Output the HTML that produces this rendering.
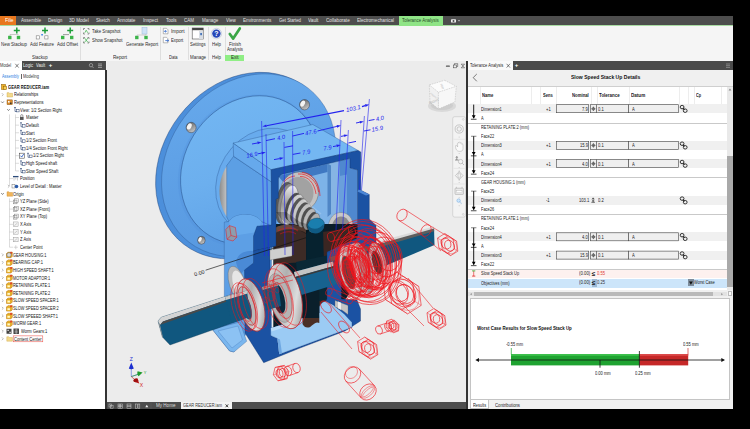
<!DOCTYPE html>
<html><head><meta charset="utf-8">
<style>
*{box-sizing:border-box;margin:0;padding:0}
html,body{width:750px;height:429px;overflow:hidden;background:#000;font-family:"Liberation Sans",sans-serif;}
.a{position:absolute}
.t{position:absolute;white-space:nowrap;line-height:1.16;font-size:4.6px;color:#222;transform-origin:0 50%}
#app{position:absolute;left:0;top:16px;width:733px;height:393px;background:#f0f0f0;overflow:hidden}
#w{position:absolute;left:0;top:-16px;width:750px;height:429px}
svg{position:absolute;overflow:visible}
</style></head><body>
<div id="app"><div id="w">
<div class="a" style="left:0px;top:16px;width:733px;height:9.5px;background:#4d4d4d;"></div>
<div class="a" style="left:0px;top:16px;width:16px;height:9.5px;background:#e8771f;"></div>
<div class="a" style="left:0px;top:25px;width:733px;height:1px;background:#a9dca3;"></div>
<div class="a" style="left:399px;top:16px;width:43.5px;height:10px;background:#8fe486;"></div>
<div class="t" style="left:4.50px;top:18.30px;font-size:5.0px;color:#fff;transform:scaleX(1.055);">File</div>
<div class="t" style="left:20.70px;top:18.30px;font-size:5.0px;color:#e2e2e2;transform:scaleX(0.911);">Assemble</div>
<div class="t" style="left:47.70px;top:18.30px;font-size:5.0px;color:#e2e2e2;transform:scaleX(0.919);">Design</div>
<div class="t" style="left:69.00px;top:18.30px;font-size:5.0px;color:#e2e2e2;transform:scaleX(0.921);">3D Model</div>
<div class="t" style="left:96.00px;top:18.30px;font-size:5.0px;color:#e2e2e2;transform:scaleX(0.896);">Sketch</div>
<div class="t" style="left:117.30px;top:18.30px;font-size:5.0px;color:#e2e2e2;transform:scaleX(0.919);">Annotate</div>
<div class="t" style="left:143.30px;top:18.30px;font-size:5.0px;color:#e2e2e2;transform:scaleX(0.930);">Inspect</div>
<div class="t" style="left:165.70px;top:18.30px;font-size:5.0px;color:#e2e2e2;transform:scaleX(0.908);">Tools</div>
<div class="t" style="left:184.30px;top:18.30px;font-size:5.0px;color:#e2e2e2;transform:scaleX(0.900);">CAM</div>
<div class="t" style="left:202.00px;top:18.30px;font-size:5.0px;color:#e2e2e2;transform:scaleX(0.902);">Manage</div>
<div class="t" style="left:226.00px;top:18.30px;font-size:5.0px;color:#e2e2e2;transform:scaleX(0.903);">View</div>
<div class="t" style="left:242.70px;top:18.30px;font-size:5.0px;color:#e2e2e2;transform:scaleX(0.926);">Environments</div>
<div class="t" style="left:279.00px;top:18.30px;font-size:5.0px;color:#e2e2e2;transform:scaleX(0.860);">Get Started</div>
<div class="t" style="left:308.30px;top:18.30px;font-size:5.0px;color:#e2e2e2;transform:scaleX(0.943);">Vault</div>
<div class="t" style="left:326.00px;top:18.30px;font-size:5.0px;color:#e2e2e2;transform:scaleX(0.927);">Collaborate</div>
<div class="t" style="left:357.00px;top:18.30px;font-size:5.0px;color:#e2e2e2;transform:scaleX(0.906);">Electromechanical</div>
<div class="t" style="left:402.30px;top:18.30px;font-size:5.0px;color:#2a4a28;transform:scaleX(0.886);">Tolerance Analysis</div>
<svg style="left:450px;top:18px" width="14" height="6" viewBox="0 0 14 6"><rect x="1" y="1.2" width="5" height="3.4" rx="0.7" fill="#eee"/><circle cx="3.5" cy="2.9" r="1" fill="#4d4d4d"/><path d="M8 2.3 L10 2.3 L9 3.6 Z" fill="#eee"/></svg>
<div class="a" style="left:0px;top:26px;width:733px;height:35px;background:#f5f5f5;"></div>
<div class="a" style="left:80.2px;top:27px;width:0.6px;height:33px;background:#dedede;"></div>
<div class="a" style="left:160.2px;top:27px;width:0.6px;height:33px;background:#dedede;"></div>
<div class="a" style="left:187.6px;top:27px;width:0.6px;height:33px;background:#dedede;"></div>
<div class="a" style="left:207.9px;top:27px;width:0.6px;height:33px;background:#dedede;"></div>
<div class="a" style="left:224.5px;top:27px;width:0.6px;height:33px;background:#dedede;"></div>
<div class="a" style="left:225px;top:54.7px;width:19.4px;height:6px;background:#90ee86;"></div>
<div class="t" style="left:1.40px;top:41.50px;font-size:5.0px;color:#2a2a2a;transform:scaleX(0.883);">New Stackup</div>
<div class="t" style="left:30.20px;top:41.50px;font-size:5.0px;color:#2a2a2a;transform:scaleX(0.865);">Add Feature</div>
<div class="t" style="left:57.20px;top:41.50px;font-size:5.0px;color:#2a2a2a;transform:scaleX(0.897);">Add Offset</div>
<div class="t" style="left:32.00px;top:55.00px;font-size:5.0px;color:#2a2a2a;transform:scaleX(0.869);">Stackup</div>
<div class="t" style="left:91.50px;top:28.70px;font-size:5.0px;color:#2a2a2a;transform:scaleX(0.862);">Take Snapshot</div>
<div class="t" style="left:91.50px;top:37.70px;font-size:5.0px;color:#2a2a2a;transform:scaleX(0.871);">Show Snapshot</div>
<div class="t" style="left:125.50px;top:41.50px;font-size:5.0px;color:#2a2a2a;transform:scaleX(0.862);">Generate Report</div>
<div class="t" style="left:113.00px;top:55.00px;font-size:5.0px;color:#2a2a2a;transform:scaleX(0.933);">Report</div>
<div class="t" style="left:171.00px;top:28.70px;font-size:5.0px;color:#2a2a2a;transform:scaleX(0.953);">Import</div>
<div class="t" style="left:171.00px;top:37.70px;font-size:5.0px;color:#2a2a2a;transform:scaleX(0.851);">Export</div>
<div class="t" style="left:169.40px;top:55.00px;font-size:5.0px;color:#2a2a2a;transform:scaleX(0.814);">Data</div>
<div class="t" style="left:189.70px;top:41.50px;font-size:5.0px;color:#2a2a2a;transform:scaleX(0.863);">Settings</div>
<div class="t" style="left:189.70px;top:55.00px;font-size:5.0px;color:#2a2a2a;transform:scaleX(0.891);">Manage</div>
<div class="t" style="left:211.90px;top:41.50px;font-size:5.0px;color:#2a2a2a;transform:scaleX(0.875);">Help</div>
<div class="t" style="left:211.90px;top:55.00px;font-size:5.0px;color:#2a2a2a;transform:scaleX(0.875);">Help</div>
<div class="t" style="left:228.50px;top:41.50px;font-size:5.0px;color:#2a2a2a;transform:scaleX(0.900);">Finish</div>
<div class="t" style="left:226.50px;top:47.20px;font-size:5.0px;color:#2a2a2a;transform:scaleX(0.859);">Analysis</div>
<div class="t" style="left:231.00px;top:55.30px;font-size:5.0px;color:#2a2a2a;transform:scaleX(0.900);">Exit</div>
<svg style="left:0;top:0" width="260" height="62" viewBox="0 0 260 62"><path d="M13.8 30.6 H19.8 M16.8 27.6 V33.6" stroke="#1e9e3a" stroke-width="1.5" fill="none"/><rect x="8.1" y="35.8" width="3.4" height="3.4" fill="#3cb54a"/><rect x="16.8" y="35.8" width="3.4" height="3.4" fill="#3cb54a"/><path d="M10 36 V34.5 H18.5" stroke="#999" stroke-width="0.5" fill="none"/><path d="M42 30.6 H48 M45 27.6 V33.6" stroke="#1e9e3a" stroke-width="1.5" fill="none"/><rect x="36.2" y="35.8" width="3.2" height="3.2" fill="#fff" stroke="#777" stroke-width="0.55"/><rect x="44.8" y="35.8" width="3.2" height="3.2" fill="#fff" stroke="#777" stroke-width="0.55"/><rect x="41.2" y="34" width="1.8" height="1.5" fill="#4a8ee8"/><path d="M67.2 30.6 H73.2 M70.2 27.6 V33.6" stroke="#1e9e3a" stroke-width="1.5" fill="none"/><rect x="61" y="35.8" width="3.4" height="3.4" fill="#3cb54a"/><rect x="70" y="35.8" width="3.4" height="3.4" fill="#3cb54a"/><path d="M63 34.6 H69" stroke="#777" stroke-width="0.7"/><path d="M83.5 30 V28.5 H85 M87.5 28.5 H89 V30 M89 32.5 V34 H87.5 M85 34 H83.5 V32.5" stroke="#555" stroke-width="0.6" fill="none"/><path d="M84.8 32.8 L86.2 30.2 L87.8 32.8" stroke="#3cb54a" stroke-width="0.7" fill="none"/><path d="M83.5 39 V37.5 H85 M87.5 37.5 H89 V39 M89 41.5 V43 H87.5 M85 43 H83.5 V41.5" stroke="#555" stroke-width="0.6" fill="none"/><path d="M84.5 38 L88 42.4 M88 38 L84.5 42.4" stroke="#3cb54a" stroke-width="0.7" fill="none"/><rect x="142" y="27.5" width="5" height="6.5" fill="#cfe3f7" stroke="#9bbbd8" stroke-width="0.5"/><rect x="135.1" y="35.8" width="3.4" height="3.4" fill="#3cb54a"/><rect x="144.3" y="35.8" width="3.4" height="3.4" fill="#3cb54a"/><path d="M137 36 V35 H146 V34" stroke="#aaa" stroke-width="0.5" fill="none"/><path d="M163.3 28.3 H166.5 L168 29.8 V33.8 H163.3 Z" fill="#fff" stroke="#777" stroke-width="0.5"/><path d="M163.8 31.3 H166.2 M165.2 30.3 L166.4 31.3 L165.2 32.3" stroke="#2a62c9" stroke-width="0.8" fill="none"/><path d="M163.3 37.3 H166.5 L168 38.8 V42.8 H163.3 Z" fill="#fff" stroke="#777" stroke-width="0.5"/><path d="M165.3 40.6 H168.4 M167.4 39.6 L168.6 40.6 L167.4 41.6" stroke="#2a62c9" stroke-width="0.8" fill="none"/><rect x="192.2" y="28" width="11" height="11" fill="#fff" stroke="#555" stroke-width="0.6"/><rect x="192.2" y="28" width="11" height="2.2" fill="#444"/><rect x="199" y="31" width="4" height="8" fill="#d8dde4"/><rect x="200.3" y="33" width="1.6" height="2.2" fill="#3a6bb5"/><circle cx="216.4" cy="33.6" r="5.3" fill="#e9edf5" stroke="#b5bccb" stroke-width="0.5"/><circle cx="216.4" cy="33.6" r="4.2" fill="#2747b8"/><text x="216.4" y="36.1" font-size="7" font-weight="bold" fill="#fff" text-anchor="middle" font-family="Liberation Sans">?</text><path d="M229.8 34 L233.2 38.6 L239.8 28.4" stroke="#3aa646" stroke-width="2.7" fill="none" stroke-linecap="round" stroke-linejoin="round"/></svg>
<div class="a" style="left:0px;top:61px;width:104.5px;height:348px;background:#fff;"></div>
<div class="a" style="left:21.8px;top:61px;width:84.7px;height:9px;background:#4a4a4a;"></div>
<div class="a" style="left:104.5px;top:70px;width:2px;height:339px;background:#333;"></div>
<div class="t" style="left:0.30px;top:63.12px;font-size:4.8px;color:#333;transform:scaleX(0.857);">Model</div>
<svg style="left:14px;top:62px" width="7" height="8" viewBox="14 62 7 8"><path d="M15.3 63.8 L18.7 67.6 M18.7 63.8 L15.3 67.6" stroke="#333" stroke-width="0.6"/></svg>
<div class="t" style="left:23.00px;top:63.12px;font-size:4.8px;color:#f2f2f2;transform:scaleX(0.871);">Logic</div>
<div class="t" style="left:35.90px;top:63.12px;font-size:4.8px;color:#f2f2f2;transform:scaleX(0.860);">Vault</div>
<div class="t" style="left:48.80px;top:62.12px;font-size:6px;color:#fff;transform:scaleX(1.000);font-weight:bold;">+</div>
<svg style="left:88px;top:62px" width="16" height="8" viewBox="0 0 16 8"><circle cx="3" cy="3.2" r="1.7" fill="none" stroke="#bbb" stroke-width="0.6"/><path d="M4.2 4.5 L5.6 6" stroke="#bbb" stroke-width="0.6"/><path d="M10 2 H14 M10 3.7 H14 M10 5.4 H14" stroke="#bbb" stroke-width="0.7"/></svg>
<div class="t" style="left:1.50px;top:73.92px;font-size:4.8px;color:#2a7de1;transform:scaleX(0.817);">Assembly</div>
<div class="a" style="left:20.6px;top:73.6px;width:0.5px;height:5.2px;background:#666;"></div>
<div class="t" style="left:23.00px;top:73.92px;font-size:4.8px;color:#333;transform:scaleX(0.821);">Modeling</div>
<div class="t" style="left:7.70px;top:84.76px;font-size:4.9px;color:#111;transform:scaleX(0.830);font-weight:bold;">GEAR REDUCER.iam</div>
<div class="t" style="left:13.60px;top:92.39px;font-size:4.9px;color:#111;transform:scaleX(0.830);">Relationships</div>
<div class="t" style="left:13.60px;top:100.02px;font-size:4.9px;color:#111;transform:scaleX(0.830);">Representations</div>
<div class="t" style="left:19.70px;top:107.65px;font-size:4.9px;color:#111;transform:scaleX(0.830);">View: 1/2 Section Right</div>
<div class="t" style="left:25.60px;top:115.28px;font-size:4.9px;color:#111;transform:scaleX(0.830);">Master</div>
<div class="t" style="left:25.60px;top:122.91px;font-size:4.9px;color:#111;transform:scaleX(0.830);">Default</div>
<div class="t" style="left:25.60px;top:130.54px;font-size:4.9px;color:#111;transform:scaleX(0.830);">Start</div>
<div class="t" style="left:25.60px;top:138.17px;font-size:4.9px;color:#111;transform:scaleX(0.830);">1/2 Section Front</div>
<div class="t" style="left:25.60px;top:145.80px;font-size:4.9px;color:#111;transform:scaleX(0.830);">1/4 Section Front Right</div>
<div class="t" style="left:33.30px;top:153.43px;font-size:4.9px;color:#111;transform:scaleX(0.830);">1/2 Section Right</div>
<div class="t" style="left:25.60px;top:161.06px;font-size:4.9px;color:#111;transform:scaleX(0.830);">High Speed shaft</div>
<div class="t" style="left:25.60px;top:168.69px;font-size:4.9px;color:#111;transform:scaleX(0.830);">Slow Speed Shaft</div>
<div class="t" style="left:19.70px;top:176.32px;font-size:4.9px;color:#111;transform:scaleX(0.830);">Position</div>
<div class="t" style="left:19.70px;top:183.95px;font-size:4.9px;color:#111;transform:scaleX(0.830);">Level of Detail : Master</div>
<div class="t" style="left:13.30px;top:191.58px;font-size:4.9px;color:#111;transform:scaleX(0.830);">Origin</div>
<div class="t" style="left:19.70px;top:199.21px;font-size:4.9px;color:#111;transform:scaleX(0.830);">YZ Plane (Side)</div>
<div class="t" style="left:19.70px;top:206.84px;font-size:4.9px;color:#111;transform:scaleX(0.830);">XZ Plane (Front)</div>
<div class="t" style="left:19.70px;top:214.47px;font-size:4.9px;color:#111;transform:scaleX(0.830);">XY Plane (Top)</div>
<div class="t" style="left:19.70px;top:222.10px;font-size:4.9px;color:#111;transform:scaleX(0.830);">X Axis</div>
<div class="t" style="left:19.70px;top:229.73px;font-size:4.9px;color:#111;transform:scaleX(0.830);">Y Axis</div>
<div class="t" style="left:19.70px;top:237.36px;font-size:4.9px;color:#111;transform:scaleX(0.830);">Z Axis</div>
<div class="t" style="left:19.70px;top:244.99px;font-size:4.9px;color:#111;transform:scaleX(0.830);">Center Point</div>
<div class="t" style="left:13.30px;top:252.62px;font-size:4.9px;color:#111;transform:scaleX(0.795);">GEAR HOUSING:1</div>
<div class="t" style="left:13.30px;top:260.25px;font-size:4.9px;color:#111;transform:scaleX(0.795);">BEARING CAP:1</div>
<div class="t" style="left:13.30px;top:267.88px;font-size:4.9px;color:#111;transform:scaleX(0.795);">HIGH SPEED SHAFT:1</div>
<div class="t" style="left:13.30px;top:275.51px;font-size:4.9px;color:#111;transform:scaleX(0.795);">MOTOR ADAPTOR:1</div>
<div class="t" style="left:13.30px;top:283.14px;font-size:4.9px;color:#111;transform:scaleX(0.795);">RETAINING PLATE:1</div>
<div class="t" style="left:13.30px;top:290.77px;font-size:4.9px;color:#111;transform:scaleX(0.795);">RETAINING PLATE:2</div>
<div class="t" style="left:13.30px;top:298.40px;font-size:4.9px;color:#111;transform:scaleX(0.795);">SLOW SPEED SPACER:1</div>
<div class="t" style="left:13.30px;top:306.03px;font-size:4.9px;color:#111;transform:scaleX(0.795);">SLOW SPEED SPACER:2</div>
<div class="t" style="left:13.30px;top:313.66px;font-size:4.9px;color:#111;transform:scaleX(0.795);">SLOW SPEEED SHAFT:1</div>
<div class="t" style="left:13.30px;top:321.29px;font-size:4.9px;color:#111;transform:scaleX(0.795);">WORM GEAR:1</div>
<div class="t" style="left:20.50px;top:328.92px;font-size:4.9px;color:#111;transform:scaleX(0.830);">Worm Gears:1</div>
<div class="t" style="left:13.80px;top:336.55px;font-size:4.9px;color:#111;transform:scaleX(0.830);">Content Center</div>
<svg style="left:0;top:0" width="106" height="410" viewBox="0 0 106 410"><path d="M15.5 114.468 V170.93 M9.5 114.468 V186.19 M9.5 198.398 V247.23" stroke="#aaa" stroke-width="0.4" fill="none"/><path d="M15.5 117.52 H19" stroke="#aaa" stroke-width="0.4"/><path d="M15.5 125.15 H19" stroke="#aaa" stroke-width="0.4"/><path d="M15.5 132.78 H19" stroke="#aaa" stroke-width="0.4"/><path d="M15.5 140.41 H19" stroke="#aaa" stroke-width="0.4"/><path d="M15.5 148.04 H19" stroke="#aaa" stroke-width="0.4"/><path d="M15.5 155.67000000000002 H19" stroke="#aaa" stroke-width="0.4"/><path d="M15.5 163.3 H19" stroke="#aaa" stroke-width="0.4"/><path d="M15.5 170.93 H19" stroke="#aaa" stroke-width="0.4"/><path d="M9.5 201.45 H13" stroke="#aaa" stroke-width="0.4"/><path d="M9.5 209.07999999999998 H13" stroke="#aaa" stroke-width="0.4"/><path d="M9.5 216.71 H13" stroke="#aaa" stroke-width="0.4"/><path d="M9.5 224.34 H13" stroke="#aaa" stroke-width="0.4"/><path d="M9.5 231.97 H13" stroke="#aaa" stroke-width="0.4"/><path d="M9.5 239.6 H13" stroke="#aaa" stroke-width="0.4"/><path d="M9.5 247.23 H13" stroke="#aaa" stroke-width="0.4"/><path d="M9.5 178.56 H13" stroke="#aaa" stroke-width="0.4"/><rect x="1.5" y="84.4" width="4" height="5" fill="#f0b429" stroke="#8a5a00" stroke-width="0.5"/><rect x="3.7" y="86.2" width="3" height="3.4" fill="#f6d05a" stroke="#8a5a00" stroke-width="0.5"/><path d="M1.9 93.22999999999999 L3.3 94.63 L1.9 96.03" stroke="#777" stroke-width="0.5" fill="none"/><path d="M7 92.63 H9 L9.6 93.33 H12.6 V97.03 H7 Z" fill="#f3d98b" stroke="#c9a545" stroke-width="0.4"/><path d="M1.2 101.46000000000001 L2.5 102.96000000000001 L3.8 101.46000000000001" stroke="#444" stroke-width="0.6" fill="none"/><rect x="7" y="99.86" width="5.4" height="4.8" fill="#d98b2b" stroke="#7a4a10" stroke-width="0.4"/><rect x="8" y="100.96000000000001" width="1.6" height="1.6" fill="#fff"/><rect x="10" y="102.56" width="1.6" height="1.4" fill="#333"/><path d="M7.2 109.09 L8.5 110.59 L9.8 109.09" stroke="#444" stroke-width="0.6" fill="none"/><path d="M14.0 107.49 H16.0 M15.0 107.49 V111.49 H16.5" stroke="#223b6b" stroke-width="0.6" fill="none"/><rect x="16.5" y="109.29" width="2.6" height="2.6" fill="#fff" stroke="#223b6b" stroke-width="0.5"/><rect x="20" y="116.92" width="3.6" height="3" fill="#555"/><path d="M20.7 116.92 V115.72 A1.1 1.1 0 0 1 22.9 115.72 V116.92" stroke="#555" stroke-width="0.6" fill="none"/><path d="M20.0 122.75 H22.0 M21.0 122.75 V126.75 H22.5" stroke="#223b6b" stroke-width="0.6" fill="none"/><rect x="22.5" y="124.55000000000001" width="2.6" height="2.6" fill="#fff" stroke="#223b6b" stroke-width="0.5"/><path d="M20.0 130.38 H22.0 M21.0 130.38 V134.38 H22.5" stroke="#223b6b" stroke-width="0.6" fill="none"/><rect x="22.5" y="132.18" width="2.6" height="2.6" fill="#fff" stroke="#223b6b" stroke-width="0.5"/><path d="M20.0 138.01 H22.0 M21.0 138.01 V142.01 H22.5" stroke="#223b6b" stroke-width="0.6" fill="none"/><rect x="22.5" y="139.81" width="2.6" height="2.6" fill="#fff" stroke="#223b6b" stroke-width="0.5"/><path d="M20.0 145.64 H22.0 M21.0 145.64 V149.64 H22.5" stroke="#223b6b" stroke-width="0.6" fill="none"/><rect x="22.5" y="147.44" width="2.6" height="2.6" fill="#fff" stroke="#223b6b" stroke-width="0.5"/><path d="M27.0 153.27 H29.0 M28.0 153.27 V157.27 H29.5" stroke="#223b6b" stroke-width="0.6" fill="none"/><rect x="29.5" y="155.07000000000002" width="2.6" height="2.6" fill="#fff" stroke="#223b6b" stroke-width="0.5"/><rect x="19.5" y="153.17000000000002" width="5" height="5" fill="#fff" stroke="#333" stroke-width="0.5"/><path d="M20.5 155.67000000000002 L21.7 157.07000000000002 L23.7 154.07000000000002" stroke="#1b4fbf" stroke-width="0.8" fill="none"/><path d="M20.0 160.9 H22.0 M21.0 160.9 V164.9 H22.5" stroke="#223b6b" stroke-width="0.6" fill="none"/><rect x="22.5" y="162.70000000000002" width="2.6" height="2.6" fill="#fff" stroke="#223b6b" stroke-width="0.5"/><path d="M20.0 168.53 H22.0 M21.0 168.53 V172.53 H22.5" stroke="#223b6b" stroke-width="0.6" fill="none"/><rect x="22.5" y="170.33" width="2.6" height="2.6" fill="#fff" stroke="#223b6b" stroke-width="0.5"/><rect x="13" y="175.96" width="5.5" height="1.3" fill="#2b4a7a"/><path d="M14 177.56 V180.56 M15.8 177.56 V179.56 M17.5 177.56 V180.56" stroke="#888" stroke-width="0.4"/><path d="M7.9 184.79 L9.3 186.19 L7.9 187.59" stroke="#777" stroke-width="0.5" fill="none"/><rect x="12" y="184.59" width="3" height="3.4" fill="#fff" stroke="#555" stroke-width="0.4"/><circle cx="16.5" cy="186.49" r="1.8" fill="#2a5aa8"/><path d="M1.2 193.01999999999998 L2.5 194.51999999999998 L3.8 193.01999999999998" stroke="#444" stroke-width="0.6" fill="none"/><path d="M7 191.82 H9 L9.6 192.51999999999998 H12.6 V196.22 H7 Z" fill="#f1b55a" stroke="#c98a2a" stroke-width="0.4"/><rect x="13.2" y="200.04999999999998" width="3.8" height="3.8" fill="#eee" stroke="#666" stroke-width="0.4"/><rect x="14.5" y="198.85" width="3.8" height="3.8" fill="none" stroke="#666" stroke-width="0.4"/><rect x="13.2" y="207.67999999999998" width="3.8" height="3.8" fill="#eee" stroke="#666" stroke-width="0.4"/><rect x="14.5" y="206.48" width="3.8" height="3.8" fill="none" stroke="#666" stroke-width="0.4"/><rect x="13.2" y="215.31" width="3.8" height="3.8" fill="#eee" stroke="#666" stroke-width="0.4"/><rect x="14.5" y="214.11" width="3.8" height="3.8" fill="none" stroke="#666" stroke-width="0.4"/><rect x="13.5" y="221.94" width="4.6" height="4.6" fill="#f4f4f4" stroke="#888" stroke-width="0.4"/><path d="M14.3 225.74 L17.1 223.34" stroke="#888" stroke-width="0.4"/><rect x="13.5" y="229.57" width="4.6" height="4.6" fill="#f4f4f4" stroke="#888" stroke-width="0.4"/><path d="M14.3 233.37 L17.1 230.97" stroke="#888" stroke-width="0.4"/><rect x="13.5" y="237.2" width="4.6" height="4.6" fill="#f4f4f4" stroke="#888" stroke-width="0.4"/><path d="M14.3 241.0 L17.1 238.6" stroke="#888" stroke-width="0.4"/><path d="M13.8 247.23 H17.8 M15.8 245.23 V249.23" stroke="#bbb" stroke-width="0.6"/><path d="M1.9 253.45999999999998 L3.3 254.85999999999999 L1.9 256.26" stroke="#777" stroke-width="0.5" fill="none"/><path d="M6.5 253.66 L7.9 252.26 H12.3 V256.26 L10.9 257.65999999999997 H6.5 Z" fill="#f5c63a" stroke="#b46a00" stroke-width="0.5"/><path d="M6.5 253.66 H10.9 V257.65999999999997 M10.9 253.66 L12.3 252.26" stroke="#b46a00" stroke-width="0.4" fill="none"/><rect x="7.5" y="254.85999999999999" width="2.4" height="1.8" fill="#fff8d0"/><circle cx="11.1" cy="252.85999999999999" r="1.1" fill="#e0452a"/><circle cx="9.0" cy="254.85999999999999" r="2.2" fill="#ddd" stroke="#555" stroke-width="0.5"/><path d="M1.9 261.09000000000003 L3.3 262.49 L1.9 263.89" stroke="#777" stroke-width="0.5" fill="none"/><path d="M6.5 261.29 L7.9 259.89 H12.3 V263.89 L10.9 265.29 H6.5 Z" fill="#f5c63a" stroke="#b46a00" stroke-width="0.5"/><path d="M6.5 261.29 H10.9 V265.29 M10.9 261.29 L12.3 259.89" stroke="#b46a00" stroke-width="0.4" fill="none"/><rect x="7.5" y="262.49" width="2.4" height="1.8" fill="#fff8d0"/><circle cx="11.1" cy="260.49" r="1.1" fill="#e0452a"/><path d="M1.9 268.72 L3.3 270.12 L1.9 271.52" stroke="#777" stroke-width="0.5" fill="none"/><path d="M6.5 268.92 L7.9 267.52 H12.3 V271.52 L10.9 272.92 H6.5 Z" fill="#f5c63a" stroke="#b46a00" stroke-width="0.5"/><path d="M6.5 268.92 H10.9 V272.92 M10.9 268.92 L12.3 267.52" stroke="#b46a00" stroke-width="0.4" fill="none"/><rect x="7.5" y="270.12" width="2.4" height="1.8" fill="#fff8d0"/><circle cx="11.1" cy="268.12" r="1.1" fill="#e0452a"/><path d="M1.9 276.35 L3.3 277.75 L1.9 279.15" stroke="#777" stroke-width="0.5" fill="none"/><path d="M6.5 276.55 L7.9 275.15 H12.3 V279.15 L10.9 280.55 H6.5 Z" fill="#f5c63a" stroke="#b46a00" stroke-width="0.5"/><path d="M6.5 276.55 H10.9 V280.55 M10.9 276.55 L12.3 275.15" stroke="#b46a00" stroke-width="0.4" fill="none"/><rect x="7.5" y="277.75" width="2.4" height="1.8" fill="#fff8d0"/><circle cx="11.1" cy="275.75" r="1.1" fill="#e0452a"/><path d="M1.9 283.98 L3.3 285.38 L1.9 286.78" stroke="#777" stroke-width="0.5" fill="none"/><path d="M6.5 284.18 L7.9 282.78 H12.3 V286.78 L10.9 288.18 H6.5 Z" fill="#f5c63a" stroke="#b46a00" stroke-width="0.5"/><path d="M6.5 284.18 H10.9 V288.18 M10.9 284.18 L12.3 282.78" stroke="#b46a00" stroke-width="0.4" fill="none"/><rect x="7.5" y="285.38" width="2.4" height="1.8" fill="#fff8d0"/><circle cx="11.1" cy="283.38" r="1.1" fill="#e0452a"/><path d="M1.9 291.61 L3.3 293.01 L1.9 294.40999999999997" stroke="#777" stroke-width="0.5" fill="none"/><path d="M6.5 291.81 L7.9 290.40999999999997 H12.3 V294.40999999999997 L10.9 295.81 H6.5 Z" fill="#f5c63a" stroke="#b46a00" stroke-width="0.5"/><path d="M6.5 291.81 H10.9 V295.81 M10.9 291.81 L12.3 290.40999999999997" stroke="#b46a00" stroke-width="0.4" fill="none"/><rect x="7.5" y="293.01" width="2.4" height="1.8" fill="#fff8d0"/><circle cx="11.1" cy="291.01" r="1.1" fill="#e0452a"/><path d="M1.9 299.24 L3.3 300.64 L1.9 302.03999999999996" stroke="#777" stroke-width="0.5" fill="none"/><path d="M6.5 299.44 L7.9 298.03999999999996 H12.3 V302.03999999999996 L10.9 303.44 H6.5 Z" fill="#f5c63a" stroke="#b46a00" stroke-width="0.5"/><path d="M6.5 299.44 H10.9 V303.44 M10.9 299.44 L12.3 298.03999999999996" stroke="#b46a00" stroke-width="0.4" fill="none"/><rect x="7.5" y="300.64" width="2.4" height="1.8" fill="#fff8d0"/><circle cx="11.1" cy="298.64" r="1.1" fill="#e0452a"/><path d="M1.9 306.87 L3.3 308.27 L1.9 309.66999999999996" stroke="#777" stroke-width="0.5" fill="none"/><path d="M6.5 307.07 L7.9 305.66999999999996 H12.3 V309.66999999999996 L10.9 311.07 H6.5 Z" fill="#f5c63a" stroke="#b46a00" stroke-width="0.5"/><path d="M6.5 307.07 H10.9 V311.07 M10.9 307.07 L12.3 305.66999999999996" stroke="#b46a00" stroke-width="0.4" fill="none"/><rect x="7.5" y="308.27" width="2.4" height="1.8" fill="#fff8d0"/><circle cx="11.1" cy="306.27" r="1.1" fill="#e0452a"/><path d="M1.9 314.5 L3.3 315.9 L1.9 317.29999999999995" stroke="#777" stroke-width="0.5" fill="none"/><path d="M6.5 314.7 L7.9 313.29999999999995 H12.3 V317.29999999999995 L10.9 318.7 H6.5 Z" fill="#f5c63a" stroke="#b46a00" stroke-width="0.5"/><path d="M6.5 314.7 H10.9 V318.7 M10.9 314.7 L12.3 313.29999999999995" stroke="#b46a00" stroke-width="0.4" fill="none"/><rect x="7.5" y="315.9" width="2.4" height="1.8" fill="#fff8d0"/><circle cx="11.1" cy="313.9" r="1.1" fill="#e0452a"/><path d="M1.9 322.13 L3.3 323.53 L1.9 324.92999999999995" stroke="#777" stroke-width="0.5" fill="none"/><path d="M6.5 322.33 L7.9 320.92999999999995 H12.3 V324.92999999999995 L10.9 326.33 H6.5 Z" fill="#f5c63a" stroke="#b46a00" stroke-width="0.5"/><path d="M6.5 322.33 H10.9 V326.33 M10.9 322.33 L12.3 320.92999999999995" stroke="#b46a00" stroke-width="0.4" fill="none"/><rect x="7.5" y="323.53" width="2.4" height="1.8" fill="#fff8d0"/><circle cx="11.1" cy="321.53" r="1.1" fill="#e0452a"/><path d="M1.9 329.76 L3.3 331.15999999999997 L1.9 332.55999999999995" stroke="#777" stroke-width="0.5" fill="none"/><rect x="6.5" y="328.76" width="5" height="5" fill="#444"/><rect x="7.5" y="329.76" width="1.2" height="1.2" fill="#fff"/><rect x="9.5" y="331.76" width="1.2" height="1.2" fill="#fff"/><rect x="13.5" y="328.55999999999995" width="5.4" height="5.4" fill="#333"/><path d="M14.5 329.96 H17.9 M14.5 331.35999999999996 H17.9 M14.5 332.76 H17.9 M16.2 328.55999999999995 V333.96" stroke="#ddd" stroke-width="0.5"/><path d="M1.9 337.39 L3.3 338.78999999999996 L1.9 340.18999999999994" stroke="#777" stroke-width="0.5" fill="none"/><path d="M6.8 336.78999999999996 H8.8 L9.4 337.48999999999995 H12.399999999999999 V341.18999999999994 H6.8 Z" fill="#f3d98b" stroke="#c9a545" stroke-width="0.4"/><rect x="13.2" y="335.89" width="29.6" height="5.9" fill="none" stroke="#e8433a" stroke-width="0.5"/></svg>
<div class="a" style="left:106.5px;top:61px;width:359.5px;height:342.5px;background:#ececec;"></div>
<svg style="left:0;top:0" width="750" height="429" viewBox="0 0 750 429">
<defs>
<linearGradient id="gFl" x1="0" y1="1" x2="1" y2="0"><stop offset="0" stop-color="#5596de"/><stop offset="0.6" stop-color="#60a2e7"/><stop offset="1" stop-color="#6aadee"/></linearGradient>
<linearGradient id="gBoss" x1="0" y1="1" x2="1" y2="0"><stop offset="0" stop-color="#5a9de4"/><stop offset="0.5" stop-color="#6cafee"/><stop offset="1" stop-color="#74b8f3"/></linearGradient>
<linearGradient id="gSil" x1="0" y1="0" x2="1" y2="1"><stop offset="0" stop-color="#e8e8e8"/><stop offset="0.45" stop-color="#b0b0b0"/><stop offset="0.7" stop-color="#dcdcdc"/><stop offset="1" stop-color="#808080"/></linearGradient>
<linearGradient id="gSil2" x1="0" y1="0" x2="0" y2="1"><stop offset="0" stop-color="#f0f0f0"/><stop offset="0.5" stop-color="#9a9a9a"/><stop offset="1" stop-color="#d8d8d8"/></linearGradient>
<linearGradient id="gCres" x1="0" y1="0" x2="1" y2="0"><stop offset="0" stop-color="#8c8c8c"/><stop offset="1" stop-color="#dedede"/></linearGradient>
<radialGradient id="gHole" cx="0.4" cy="0.45" r="0.6"><stop offset="0" stop-color="#ffffff"/><stop offset="0.6" stop-color="#cfcfcf"/><stop offset="1" stop-color="#6a6a6a"/></radialGradient>
<linearGradient id="gHoleB" x1="0" y1="0" x2="0.6" y2="1"><stop offset="0" stop-color="#5c5c5c"/><stop offset="0.55" stop-color="#8e8e8e"/><stop offset="1" stop-color="#c4c4c4"/></linearGradient>
<clipPath id="vpclip"><rect x="106.5" y="61" width="359.5" height="342.3"/></clipPath>
</defs>
<g clip-path="url(#vpclip)">
<ellipse cx="244.5" cy="165.6" rx="99.4" ry="82" transform="rotate(-52.3 244.5 165.6)" fill="#4c8fdb" stroke="#1d3f73" stroke-width="0.4"/>
<ellipse cx="248.6" cy="165.2" rx="97.4" ry="80.3" transform="rotate(-52.3 248.6 165.2)" fill="url(#gFl)" stroke="#2a548f" stroke-width="0.35"/>
<ellipse cx="249.2" cy="170.6" rx="79.2" ry="68" transform="rotate(-58 249.2 170.6)" fill="#4f90d9" opacity="0.3"/>
<ellipse cx="250" cy="170" rx="77.2" ry="66.2" transform="rotate(-58 250 170)" fill="url(#gBoss)" stroke="#234a85" stroke-width="0.45"/>
<ellipse cx="266" cy="182" rx="56" ry="48" transform="rotate(-58 266 182)" fill="#68abed" stroke="#2c5592" stroke-width="0.35"/>
<ellipse cx="191.1" cy="127.5" rx="5.0" ry="5.20" fill="url(#gHoleB)" stroke="#2e3b4e" stroke-width="0.5"/><ellipse cx="189.30" cy="126.40" rx="2.10" ry="3.30" transform="rotate(28 189.30 126.40)" fill="#f4f4f4"/>
<ellipse cx="304.5" cy="104.7" rx="5.0" ry="5.20" fill="url(#gHoleB)" stroke="#2e3b4e" stroke-width="0.5"/><ellipse cx="302.70" cy="103.60" rx="2.10" ry="3.30" transform="rotate(28 302.70 103.60)" fill="#f4f4f4"/>
<ellipse cx="201.4" cy="240.3" rx="3.8" ry="3.95" fill="url(#gHoleB)" stroke="#2e3b4e" stroke-width="0.5"/><ellipse cx="200.03" cy="239.46" rx="1.60" ry="2.51" transform="rotate(28 200.03 239.46)" fill="#f4f4f4"/>
<path d="M227 166 C216 182 217 206 230 221 L230 166 Z" fill="url(#gCres)"/>
<path d="M224.3 222 L229 221.5 C234 213 254 211.5 261.5 221.5 L271.5 225 L271.5 345 L262 358 L246.7 333 L233.9 352 L229.6 351 L212.5 329.6 L224.3 318 Z" fill="#5d9fe5" stroke="#234a85" stroke-width="0.3"/>
<path d="M226.7 165.6 L233.6 156.3 L271.6 182 L271.6 226 L261.5 221.5 C254 211.5 234 213 229 221.5 L226.7 217 Z" fill="#5c9fe4" stroke="#234a85" stroke-width="0.35"/>
<path d="M229 221.5 C234 213 254 211.5 261.5 221.5 L258 232 L232 236 Z" fill="#67aaec"/>
<path d="M233.2 143.1 L271.2 169.7 L271.6 182 L233.6 156.3 Z" fill="#66a9ec" stroke="#234a85" stroke-width="0.35"/>
<path d="M233.2 143.1 L312.8 124.5 L358.2 150.5 L271.2 169.7 Z" fill="#74b7f2" stroke="#234a85" stroke-width="0.35"/>
<path d="M212.5 329.6 L224.3 326 L240 322 L246.7 341.3 L233.9 352 L229.6 351 Z" fill="#7ab6ee" stroke="#234a85" stroke-width="0.3"/>
<path d="M218 331 L238 326 L242.5 340 L232 348 Z" fill="#8cc2f3" stroke="#3a6cb0" stroke-width="0.3"/>
<path d="M236 262.5 C237 255 242 250.5 253.5 251 L253.5 263 L244.5 270 L240 275 Z" fill="#4a8ad6"/>
<ellipse cx="237.5" cy="284" rx="8" ry="18.5" transform="rotate(-18 237.5 284)" fill="#bdbdbd" stroke="#555" stroke-width="0.3"/>
<ellipse cx="239.5" cy="285" rx="6" ry="15" transform="rotate(-18 239.5 285)" fill="#e6e6e6"/>
<path d="M278 176 L350 158.5 L350 168 L357.5 170 L357.5 240 L278 250 Z" fill="#7db3e8"/>
<path d="M327.5 163.5 L350 158.5 L350 215 L327.5 217 Z" fill="#86b4e4"/>
<path d="M327.5 163.5 L331 165.5 L331 214 L327.5 217 Z" fill="#4f86c6"/>
<path d="M339.5 161 L350 158.5 L350 168 L357.5 170 L357.5 225 L339.5 225 Z" fill="#4f88cf"/>
<path d="M339.5 176 L347 174.5 L347 214 L339.5 215 Z" fill="#6a9fdc"/>
<path d="M278 176 L327.5 164 L327.5 172 L284 183 Z" fill="#3f78c2"/>
<ellipse cx="299.5" cy="191.7" rx="19" ry="19.8" fill="#c2c2c2" stroke="#555" stroke-width="0.4"/>
<ellipse cx="298.5" cy="193" rx="15" ry="16" fill="#a2a2a2"/>
<path d="M327.5 234 C327.5 218 334 212.5 341 212.5 C348 212.5 353 218 353 226 L353 238 Z" fill="#c8c8c8" stroke="#555" stroke-width="0.3"/>
<path d="M331 234 C331 221 336 216.5 341 216.5 C346.5 216.5 350 221 350 228 L350 238 Z" fill="#8a8a8a"/>
<path d="M273.3 224 L357.5 224 L372 236 L372 262 L345 300 L334 318 L273.3 336 Z" fill="#0b1d28"/>
<path d="M274 229 C280 223 298 223 306 229 L306 262 L274 264 Z" fill="#3d2b26"/>
<path d="M274 229 C280 223 298 223 306 229 L306 233 C298 228 282 228 274 234 Z" fill="#6a4a3c"/>
<path d="M322 232 L352 228 L360 262 L324 266 Z" fill="#3a2622"/>
<path d="M306 228 L323 226 L325 320 L308 325 Z" fill="#06222f"/>
<path d="M296 262 L334 254 L336 305 L300 312 Z" fill="#0a2836"/>
<path d="M300 305 L334 298 L334 318 L322 322 C314 316 306 316 300 322 Z" fill="#3a2824"/>
<ellipse cx="284.5" cy="203" rx="8.8" ry="21" transform="rotate(10 284.5 203)" fill="#5c5c5c" stroke="#2a2a2a" stroke-width="0.3"/>
<ellipse cx="287" cy="204" rx="8.8" ry="20.5" transform="rotate(10 287 204)" fill="#8a8a8a" stroke="#2a2a2a" stroke-width="0.25"/>
<ellipse cx="289.5" cy="205" rx="8.6" ry="20" transform="rotate(10 289.5 205)" fill="url(#gSil2)" stroke="#2a2a2a" stroke-width="0.25"/>
<ellipse cx="293.0" cy="206.6" rx="6.9" ry="14.3" transform="rotate(20 293.0 206.6)" fill="#4e4e4e" stroke="#2a2a2a" stroke-width="0.25"/>
<ellipse cx="295.4" cy="208.4" rx="7.1" ry="14.9" transform="rotate(20 295.4 208.4)" fill="#cfcfcf" stroke="#2a2a2a" stroke-width="0.25"/>
<ellipse cx="297.7" cy="210.2" rx="6.3" ry="13.1" transform="rotate(20 297.7 210.2)" fill="#585858" stroke="#2a2a2a" stroke-width="0.25"/>
<ellipse cx="300.1" cy="212.0" rx="6.5" ry="13.6" transform="rotate(20 300.1 212.0)" fill="#c9c9c9" stroke="#2a2a2a" stroke-width="0.25"/>
<ellipse cx="302.4" cy="213.8" rx="5.7" ry="11.8" transform="rotate(20 302.4 213.8)" fill="#545454" stroke="#2a2a2a" stroke-width="0.25"/>
<ellipse cx="304.8" cy="215.6" rx="6.0" ry="12.4" transform="rotate(20 304.8 215.6)" fill="#c2c2c2" stroke="#2a2a2a" stroke-width="0.25"/>
<ellipse cx="307.1" cy="217.4" rx="5.1" ry="10.6" transform="rotate(20 307.1 217.4)" fill="#505050" stroke="#2a2a2a" stroke-width="0.25"/>
<ellipse cx="309.4" cy="219.2" rx="5.4" ry="11.2" transform="rotate(20 309.4 219.2)" fill="#bababa" stroke="#2a2a2a" stroke-width="0.25"/>
<ellipse cx="311.8" cy="221.0" rx="4.5" ry="9.3" transform="rotate(20 311.8 221.0)" fill="#4a4a4a" stroke="#2a2a2a" stroke-width="0.25"/>
<ellipse cx="314.1" cy="222.8" rx="4.8" ry="9.9" transform="rotate(20 314.1 222.8)" fill="#b0b0b0" stroke="#2a2a2a" stroke-width="0.25"/>
<path d="M276 212 L284 222 L306 234 L314 226 L300 222 L286 212 Z" fill="#000" opacity="0.25"/>
<path d="M299 196 L321 214" stroke="#fff" stroke-width="1.6" opacity="0.18"/>
<ellipse cx="316" cy="225" rx="8.6" ry="6.8" transform="rotate(-15 316 225)" fill="#1a7eae" stroke="#0b3a55" stroke-width="0.4"/>
<path d="M308 228 C309.5 234.5 319.5 236 324 228 L323.5 224 C319.5 230 311.5 230.5 308 225 Z" fill="#0f5a83"/>
<path fill="#1b52a3" stroke="#0e2f66" stroke-width="0.35" d="M271.2 169.7 L358.2 150.5 L360.8 152 L360.8 190.2 L369.3 194.5 L369.3 219 L376 225.5 L376 244 L362 249 L357.5 240 L357.5 170 L350 168 L350 158.5 L283 174 C280 175 278.6 176.5 278.4 179 L278.4 198.3 L276 199 L276 246 L269.8 247.5 L253.5 251 L253.5 236 L257 226.2 L271.6 225 Z"/>
<path d="M358.7 189.5 L360.8 190.2 L369.3 194.5 L366 195.5 L357.5 191.5 Z" fill="#4c87d6"/>
<path fill="#1b52a3" stroke="#0e2f66" stroke-width="0.35" d="M253.5 251 L269.8 247.5 L270 262 L270.8 328.2 L270.8 335.6 L277.4 338.4 L279.2 354.3 L351.9 327.3 L351.9 322.6 L333.3 305 L325.8 301.2 L327 299 L327 252 L341.3 250 L341.3 299 L357 300 L360.5 309 L360.5 321 L345 331 L300 348 L263.7 362.7 L245 333 L244.5 270 L253.5 263 Z"/>
<path fill="#1b52a3" d="M327 252 L357.5 238 L376 244 L362 249 L341.3 251 Z"/>
<path d="M270.8 328.2 L302.5 318 L319.3 313 L319.3 306.8 C321 303 323 301.5 325.8 301.2 L333.3 305 L344.4 314.2 L351.9 322.6 L351.9 327.3 L279.2 354.3 L277.4 338.4 L270.8 335.6 Z" fill="#9bcbf4" stroke="#2a5aa0" stroke-width="0.3"/>
<path d="M270.8 328.2 L302.5 318 L319.3 313 L319.3 316 L271.5 331.5 Z" fill="#b9dcf9"/>
<path d="M277.4 338.4 L279.2 354.3 L282 353.2 L280 339.5 Z" fill="#6fa8e2"/>
<path d="M302.5 288 L319.3 284 L319.3 318 L302.5 318 Z" fill="#0a1f2b"/>
<path d="M302.5 318 L319.3 318 L319.3 323 C315 320.5 312.5 326.5 308.5 327.5 C305.5 328 303.5 326 302.5 324 Z" fill="#4a2f26"/>
<path d="M335 300.5 L348 305.5 L348 314.5 L342.6 310.5 L335 306.8 Z" fill="#c4c4c4" stroke="#666" stroke-width="0.3"/>
<path d="M338 301.6 L341 302.8 L341 309.7 L338 308.3 Z" fill="#efefef"/>
<path d="M270 250 L292 246 L292 256 L270 260 Z" fill="#cfcfcf" stroke="#666" stroke-width="0.3"/>
<path d="M330 257 L434 227.5 L434.5 245 L385 266 L330 276 Z" fill="#10577f"/>
<path d="M330 257 L434 227.5 L434.2 231.3 L331 261.5 Z" fill="#5e5e5e"/>
<path d="M378 241.5 L434 226.6 L434 228.6 L379 244 Z" fill="#d9d9d9"/>
<path d="M294 272 L333 261.5 L339 283.5 L301.5 295 Z" fill="#17628f"/>
<path d="M294 272 L333 261.5 L334 266 L295 277 Z" fill="#c4c4c4"/>
<path d="M295 277 L334 266 L334.3 267.5 L295.4 278.6 Z" fill="#3a3a3a"/>
<path d="M158 321 L161.3 317.2 L236 293 L252 289 L252 316 L170 345 L162.4 337 Z" fill="#10577f" stroke="#0a2c44" stroke-width="0.3"/>
<path d="M158 321 L161.3 317.2 L236 293 L238 296 L163 321.6 L160 325 Z" fill="#d4d4d4"/>
<path d="M160 325 L163 321.6 L238 296 L238.5 297.6 L164 323.6 Z" fill="#4a4a4a"/>
<path d="M158 321 L160 325 L163 337.5 L162.4 337 Z" fill="#9a9a9a"/>
<ellipse cx="285" cy="296" rx="16" ry="33.5" transform="rotate(-14 285 296)" fill="url(#gSil)" stroke="#444" stroke-width="0.4"/>
<ellipse cx="280" cy="298" rx="10.5" ry="25" transform="rotate(-14 280 298)" fill="#b4b4b4" stroke="#666" stroke-width="0.3"/>
<ellipse cx="278.5" cy="298.5" rx="6" ry="15.5" transform="rotate(-14 278.5 298.5)" fill="#0b2a3c"/>
<path d="M262 287 L278 282.5 L281 306 L266 310.5 Z" fill="#10577f"/>
<path d="M262 287 L278 282.5 L278.4 285.5 L262.6 290 Z" fill="#9a9a9a"/>
<ellipse cx="251" cy="305" rx="12.5" ry="27" transform="rotate(-16 251 305)" fill="url(#gSil)" stroke="#444" stroke-width="0.4"/>
<ellipse cx="247" cy="306" rx="7.5" ry="20" transform="rotate(-16 247 306)" fill="#b8b8b8" stroke="#666" stroke-width="0.3"/>
<ellipse cx="246" cy="306.5" rx="4.8" ry="13.5" transform="rotate(-16 246 306.5)" fill="#10577f"/>
<path d="M225 297 L247 290.5 L250 317 L232 323 Z" fill="#10577f"/>
<path d="M225 297 L247 290.5 L247.6 293.5 L226 300 Z" fill="#c8c8c8"/>
<ellipse cx="362" cy="268.5" rx="9.5" ry="27" transform="rotate(-14 362 268.5)" fill="#a8a8a8"/><path d="M343.2 246.5 L355.2 243 L368.8 294 L356.8 297.5 Z" fill="url(#gSil2)"/><ellipse cx="350" cy="272" rx="9.5" ry="27" transform="rotate(-14 350 272)" fill="url(#gSil)" stroke="#555" stroke-width="0.3"/><ellipse cx="348.5" cy="272.5" rx="5.5" ry="17" transform="rotate(-14 348.5 272.5)" fill="#4a4a4a"/><ellipse cx="378" cy="262" rx="8" ry="20" transform="rotate(-14 378 262)" fill="#c6c6c6" opacity="0.9"/><ellipse cx="377" cy="262.5" rx="4.5" ry="12" transform="rotate(-14 377 262.5)" fill="#3a3a3a"/><ellipse cx="366.0" cy="262.0" rx="34.9" ry="43.0" transform="rotate(-14 366.0 262.0)" fill="none" stroke="#f0141c" stroke-width="0.6" opacity="1"/><ellipse cx="364.0" cy="263.0" rx="30.6" ry="39.0" transform="rotate(-14 364.0 263.0)" fill="none" stroke="#f0141c" stroke-width="0.6" opacity="1"/><ellipse cx="362.0" cy="264.0" rx="25.5" ry="34.0" transform="rotate(-14 362.0 264.0)" fill="none" stroke="#f0141c" stroke-width="0.6" opacity="1"/><ellipse cx="368.0" cy="261.0" rx="28.1" ry="36.0" transform="rotate(-14 368.0 261.0)" fill="none" stroke="#f0141c" stroke-width="0.6" opacity="1"/><ellipse cx="372.0" cy="259.0" rx="23.8" ry="31.0" transform="rotate(-14 372.0 259.0)" fill="none" stroke="#f0141c" stroke-width="0.6" opacity="1"/><ellipse cx="358.0" cy="266.0" rx="20.4" ry="30.0" transform="rotate(-14 358.0 266.0)" fill="none" stroke="#f0141c" stroke-width="0.6" opacity="1"/><ellipse cx="356.0" cy="267.0" rx="19.0" ry="26.0" transform="rotate(-14 356.0 267.0)" fill="none" stroke="#f0141c" stroke-width="0.6" opacity="1"/><ellipse cx="352.0" cy="270.0" rx="14.0" ry="24.0" transform="rotate(-14 352.0 270.0)" fill="none" stroke="#f0141c" stroke-width="0.6" opacity="1"/><ellipse cx="350.0" cy="272.0" rx="9.5" ry="27.0" transform="rotate(-14 350.0 272.0)" fill="none" stroke="#f0141c" stroke-width="0.6" opacity="1"/><ellipse cx="370.0" cy="262.0" rx="20.0" ry="25.0" transform="rotate(-14 370.0 262.0)" fill="none" stroke="#f0141c" stroke-width="0.6" opacity="1"/><ellipse cx="374.0" cy="261.0" rx="15.0" ry="19.0" transform="rotate(-14 374.0 261.0)" fill="none" stroke="#f0141c" stroke-width="0.6" opacity="1"/><ellipse cx="376.0" cy="260.0" rx="11.0" ry="14.0" transform="rotate(-14 376.0 260.0)" fill="none" stroke="#f0141c" stroke-width="0.6" opacity="1"/><ellipse cx="382.0" cy="258.0" rx="18.7" ry="26.0" transform="rotate(-14 382.0 258.0)" fill="none" stroke="#f0141c" stroke-width="0.6" opacity="1"/><ellipse cx="385.0" cy="257.0" rx="17.0" ry="20.0" transform="rotate(-14 385.0 257.0)" fill="none" stroke="#f0141c" stroke-width="0.6" opacity="1"/><ellipse cx="360.0" cy="265.0" rx="22.1" ry="32.0" transform="rotate(-14 360.0 265.0)" fill="none" stroke="#f0141c" stroke-width="0.6" opacity="1"/><ellipse cx="348.5" cy="272.5" rx="5.5" ry="17.0" transform="rotate(-14 348.5 272.5)" fill="none" stroke="#f0141c" stroke-width="0.6" opacity="1"/><ellipse cx="362.0" cy="268.5" rx="9.5" ry="27.0" transform="rotate(-14 362.0 268.5)" fill="none" stroke="#f0141c" stroke-width="0.6" opacity="1"/><ellipse cx="378.0" cy="262.0" rx="8.0" ry="20.0" transform="rotate(-14 378.0 262.0)" fill="none" stroke="#f0141c" stroke-width="0.6" opacity="1"/><ellipse cx="388.0" cy="256.0" rx="12.0" ry="15.0" transform="rotate(-14 388.0 256.0)" fill="none" stroke="#f0141c" stroke-width="0.6" opacity="1"/><ellipse cx="367.0" cy="262.0" rx="31.4" ry="41.0" transform="rotate(-14 367.0 262.0)" fill="none" stroke="#f0141c" stroke-width="0.6" opacity="1"/><ellipse cx="349.0" cy="272.5" rx="6.0" ry="14.0" transform="rotate(-14 349.0 272.5)" fill="none" stroke="#f0141c" stroke-width="0.6" opacity="1"/><ellipse cx="352.4" cy="271.3" rx="6.9" ry="15.5" transform="rotate(-14 352.4 271.3)" fill="none" stroke="#f0141c" stroke-width="0.6" opacity="1"/><ellipse cx="355.8" cy="270.1" rx="7.8" ry="17.0" transform="rotate(-14 355.8 270.1)" fill="none" stroke="#f0141c" stroke-width="0.6" opacity="1"/><ellipse cx="359.2" cy="268.9" rx="8.7" ry="18.5" transform="rotate(-14 359.2 268.9)" fill="none" stroke="#f0141c" stroke-width="0.6" opacity="1"/><ellipse cx="362.6" cy="267.7" rx="9.6" ry="20.0" transform="rotate(-14 362.6 267.7)" fill="none" stroke="#f0141c" stroke-width="0.6" opacity="1"/><ellipse cx="366.0" cy="266.5" rx="10.5" ry="21.5" transform="rotate(-14 366.0 266.5)" fill="none" stroke="#f0141c" stroke-width="0.6" opacity="1"/><ellipse cx="369.4" cy="265.3" rx="11.4" ry="23.0" transform="rotate(-14 369.4 265.3)" fill="none" stroke="#f0141c" stroke-width="0.6" opacity="1"/><ellipse cx="372.8" cy="264.1" rx="12.3" ry="24.5" transform="rotate(-14 372.8 264.1)" fill="none" stroke="#f0141c" stroke-width="0.6" opacity="1"/><ellipse cx="376.2" cy="262.9" rx="13.2" ry="26.0" transform="rotate(-14 376.2 262.9)" fill="none" stroke="#f0141c" stroke-width="0.6" opacity="1"/><ellipse cx="356.4" cy="266.4" rx="12.5" ry="25.6" transform="rotate(-14 356.4 266.4)" fill="none" stroke="#f0141c" stroke-width="0.55" opacity="1"/><ellipse cx="361.9" cy="265.9" rx="8.0" ry="11.4" transform="rotate(-14 361.9 265.9)" fill="none" stroke="#f0141c" stroke-width="0.55" opacity="1"/><ellipse cx="349.0" cy="270.6" rx="5.8" ry="11.7" transform="rotate(-14 349.0 270.6)" fill="none" stroke="#f0141c" stroke-width="0.55" opacity="1"/><ellipse cx="359.0" cy="269.6" rx="7.3" ry="13.0" transform="rotate(-14 359.0 269.6)" fill="none" stroke="#f0141c" stroke-width="0.55" opacity="1"/><ellipse cx="364.3" cy="268.6" rx="15.5" ry="23.9" transform="rotate(-14 364.3 268.6)" fill="none" stroke="#f0141c" stroke-width="0.55" opacity="1"/><ellipse cx="373.4" cy="260.2" rx="18.2" ry="30.6" transform="rotate(-14 373.4 260.2)" fill="none" stroke="#f0141c" stroke-width="0.55" opacity="1"/><ellipse cx="351.8" cy="267.8" rx="14.9" ry="17.4" transform="rotate(-14 351.8 267.8)" fill="none" stroke="#f0141c" stroke-width="0.55" opacity="1"/><ellipse cx="352.7" cy="270.3" rx="16.1" ry="25.3" transform="rotate(-14 352.7 270.3)" fill="none" stroke="#f0141c" stroke-width="0.55" opacity="1"/><ellipse cx="362.2" cy="264.0" rx="6.3" ry="11.4" transform="rotate(-14 362.2 264.0)" fill="none" stroke="#f0141c" stroke-width="0.55" opacity="1"/><ellipse cx="365.7" cy="265.0" rx="13.0" ry="17.5" transform="rotate(-14 365.7 265.0)" fill="none" stroke="#f0141c" stroke-width="0.55" opacity="1"/><ellipse cx="359.8" cy="266.2" rx="23.2" ry="29.1" transform="rotate(-14 359.8 266.2)" fill="none" stroke="#f0141c" stroke-width="0.55" opacity="1"/><ellipse cx="354.3" cy="269.7" rx="20.1" ry="22.6" transform="rotate(-14 354.3 269.7)" fill="none" stroke="#f0141c" stroke-width="0.55" opacity="1"/><ellipse cx="367.0" cy="263.8" rx="17.1" ry="33.5" transform="rotate(-14 367.0 263.8)" fill="none" stroke="#f0141c" stroke-width="0.55" opacity="1"/><ellipse cx="358.9" cy="269.3" rx="9.5" ry="13.6" transform="rotate(-14 358.9 269.3)" fill="none" stroke="#f0141c" stroke-width="0.55" opacity="1"/><ellipse cx="349.0" cy="272.0" rx="20.9" ry="28.3" transform="rotate(-14 349.0 272.0)" fill="none" stroke="#f0141c" stroke-width="0.55" opacity="1"/><ellipse cx="370.8" cy="262.7" rx="19.9" ry="26.7" transform="rotate(-14 370.8 262.7)" fill="none" stroke="#f0141c" stroke-width="0.55" opacity="1"/><ellipse cx="363.1" cy="266.1" rx="27.8" ry="30.2" transform="rotate(-14 363.1 266.1)" fill="none" stroke="#f0141c" stroke-width="0.55" opacity="1"/><ellipse cx="360.3" cy="268.2" rx="9.2" ry="11.5" transform="rotate(-14 360.3 268.2)" fill="none" stroke="#f0141c" stroke-width="0.55" opacity="1"/><ellipse cx="364.8" cy="268.7" rx="17.6" ry="29.7" transform="rotate(-14 364.8 268.7)" fill="none" stroke="#f0141c" stroke-width="0.55" opacity="1"/><ellipse cx="358.0" cy="269.0" rx="7.2" ry="10.5" transform="rotate(-14 358.0 269.0)" fill="none" stroke="#f0141c" stroke-width="0.55" opacity="1"/><ellipse cx="352.4" cy="267.6" rx="9.5" ry="11.4" transform="rotate(-14 352.4 267.6)" fill="none" stroke="#f0141c" stroke-width="0.55" opacity="1"/><ellipse cx="351.4" cy="268.7" rx="17.2" ry="19.4" transform="rotate(-14 351.4 268.7)" fill="none" stroke="#f0141c" stroke-width="0.55" opacity="1"/><path d="M370.1 271.6 L377.4 276.7" stroke="#f0141c" stroke-width="0.5" fill="none"/><path d="M370.6 256.2 L378.3 247.6" stroke="#f0141c" stroke-width="0.5" fill="none"/><path d="M360.4 277.1 L359.1 285.9" stroke="#f0141c" stroke-width="0.5" fill="none"/><path d="M371.3 255.6 L375.6 250.7" stroke="#f0141c" stroke-width="0.5" fill="none"/><path d="M365.5 274.8 L368.3 281.8" stroke="#f0141c" stroke-width="0.5" fill="none"/><path d="M351.9 267.2 L345.4 268.0" stroke="#f0141c" stroke-width="0.5" fill="none"/><path d="M371.1 266.3 L378.2 266.5" stroke="#f0141c" stroke-width="0.5" fill="none"/><path d="M350.6 259.7 L342.1 255.1" stroke="#f0141c" stroke-width="0.5" fill="none"/><path d="M351.7 264.8 L342.6 263.7" stroke="#f0141c" stroke-width="0.5" fill="none"/><path d="M373.5 271.1 L382.7 275.1" stroke="#f0141c" stroke-width="0.5" fill="none"/><ellipse cx="331.0" cy="237.0" rx="3.4" ry="4.5" transform="rotate(-15.945395900922854 331.0 237.0)" fill="none" stroke="#f0141c" stroke-width="0.6" opacity="1"/><ellipse cx="352.0" cy="231.0" rx="3.4" ry="4.5" transform="rotate(-15.945395900922854 352.0 231.0)" fill="none" stroke="#f0141c" stroke-width="0.6" opacity="1"/><path d="M332.2 241.3 L353.2 235.3" stroke="#f0141c" stroke-width="0.6" fill="none"/><path d="M329.8 232.7 L350.8 226.7" stroke="#f0141c" stroke-width="0.6" fill="none"/><ellipse cx="329.0" cy="292.0" rx="3.0" ry="4.0" transform="rotate(20.854458039578347 329.0 292.0)" fill="none" stroke="#f0141c" stroke-width="0.6" opacity="1"/><ellipse cx="350.0" cy="300.0" rx="3.0" ry="4.0" transform="rotate(20.854458039578347 350.0 300.0)" fill="none" stroke="#f0141c" stroke-width="0.6" opacity="1"/><path d="M327.6 295.7 L348.6 303.7" stroke="#f0141c" stroke-width="0.6" fill="none"/><path d="M330.4 288.3 L351.4 296.3" stroke="#f0141c" stroke-width="0.6" fill="none"/><ellipse cx="402.0" cy="215.0" rx="4.7" ry="6.2" transform="rotate(32.855721950433 402.0 215.0)" fill="none" stroke="#f0141c" stroke-width="0.6" opacity="1"/><ellipse cx="426.0" cy="230.5" rx="4.7" ry="6.2" transform="rotate(32.855721950433 426.0 230.5)" fill="none" stroke="#f0141c" stroke-width="0.6" opacity="1"/><path d="M398.6 220.2 L422.6 235.7" stroke="#f0141c" stroke-width="0.6" fill="none"/><path d="M405.4 209.8 L429.4 225.3" stroke="#f0141c" stroke-width="0.6" fill="none"/><path d="M429.3 225.2 L447.0 236.0" stroke="#f0141c" stroke-width="0.55" fill="none"/><path d="M422.7 235.8 L441.0 251.0" stroke="#f0141c" stroke-width="0.55" fill="none"/><path d="M453.1 239.0 L454.4 249.0 L447.3 253.4 L438.9 248.0 L437.6 238.0 L444.7 233.6 Z" fill="none" stroke="#f0141c" stroke-width="0.6"/><path d="M456.6 241.2 L457.8 251.2 L450.7 255.6 L442.3 250.1 L441.1 240.2 L448.2 235.8 Z" fill="none" stroke="#f0141c" stroke-width="0.6"/><path d="M453.1 239.0 L456.6 241.2" stroke="#f0141c" stroke-width="0.35" fill="none"/><path d="M454.4 249.0 L457.8 251.2" stroke="#f0141c" stroke-width="0.35" fill="none"/><path d="M447.3 253.4 L450.7 255.6" stroke="#f0141c" stroke-width="0.35" fill="none"/><path d="M438.9 248.0 L442.3 250.1" stroke="#f0141c" stroke-width="0.35" fill="none"/><path d="M437.6 238.0 L441.1 240.2" stroke="#f0141c" stroke-width="0.35" fill="none"/><path d="M444.7 233.6 L448.2 235.8" stroke="#f0141c" stroke-width="0.35" fill="none"/><ellipse cx="446.0" cy="243.5" rx="4.6" ry="5.8" transform="rotate(-32 446.0 243.5)" fill="none" stroke="#f0141c" stroke-width="0.6" opacity="1"/><ellipse cx="449.5" cy="245.7" rx="4.6" ry="5.8" transform="rotate(-32 449.5 245.7)" fill="none" stroke="#f0141c" stroke-width="0.6" opacity="1"/><ellipse cx="449.5" cy="245.7" rx="6.9" ry="8.6" transform="rotate(-32 449.5 245.7)" fill="none" stroke="#f0141c" stroke-width="0.35" opacity="1"/><path d="M412.6 282.5 L415.0 301.4 L401.4 309.9 L385.4 299.5 L383.0 280.6 L396.6 272.1 Z" fill="none" stroke="#f0141c" stroke-width="0.6"/><path d="M418.8 286.5 L421.2 305.4 L407.6 313.9 L391.6 303.5 L389.2 284.6 L402.8 276.1 Z" fill="none" stroke="#f0141c" stroke-width="0.6"/><path d="M412.6 282.5 L418.8 286.5" stroke="#f0141c" stroke-width="0.35" fill="none"/><path d="M415.0 301.4 L421.2 305.4" stroke="#f0141c" stroke-width="0.35" fill="none"/><path d="M401.4 309.9 L407.6 313.9" stroke="#f0141c" stroke-width="0.35" fill="none"/><path d="M385.4 299.5 L391.6 303.5" stroke="#f0141c" stroke-width="0.35" fill="none"/><path d="M383.0 280.6 L389.2 284.6" stroke="#f0141c" stroke-width="0.35" fill="none"/><path d="M396.6 272.1 L402.8 276.1" stroke="#f0141c" stroke-width="0.35" fill="none"/><ellipse cx="399.0" cy="291.0" rx="8.8" ry="11.0" transform="rotate(-32 399.0 291.0)" fill="none" stroke="#f0141c" stroke-width="0.6" opacity="1"/><ellipse cx="405.2" cy="295.0" rx="8.8" ry="11.0" transform="rotate(-32 405.2 295.0)" fill="none" stroke="#f0141c" stroke-width="0.6" opacity="1"/><ellipse cx="405.2" cy="295.0" rx="13.1" ry="16.4" transform="rotate(-32 405.2 295.0)" fill="none" stroke="#f0141c" stroke-width="0.35" opacity="1"/><ellipse cx="398.0" cy="293.0" rx="9.0" ry="12.0" transform="rotate(-32 398.0 293.0)" fill="none" stroke="#f0141c" stroke-width="0.6" opacity="1"/><ellipse cx="403.0" cy="293.0" rx="12.0" ry="15.0" transform="rotate(-32 403.0 293.0)" fill="none" stroke="#f0141c" stroke-width="0.6" opacity="1"/><ellipse cx="405.0" cy="294.0" rx="8.0" ry="10.0" transform="rotate(-32 405.0 294.0)" fill="none" stroke="#f0141c" stroke-width="0.6" opacity="1"/><path d="M408.0 278.0 L433.0 308.0" stroke="#f0141c" stroke-width="0.55" fill="none"/><path d="M398.0 300.0 L424.0 326.0" stroke="#f0141c" stroke-width="0.55" fill="none"/><path d="M441.8 313.8 L443.0 323.2 L436.2 327.5 L428.2 322.2 L427.0 312.8 L433.8 308.5 Z" fill="none" stroke="#f0141c" stroke-width="0.6"/><path d="M444.8 315.7 L446.0 325.1 L439.2 329.4 L431.2 324.1 L430.0 314.7 L436.8 310.4 Z" fill="none" stroke="#f0141c" stroke-width="0.6"/><path d="M441.8 313.8 L444.8 315.7" stroke="#f0141c" stroke-width="0.35" fill="none"/><path d="M443.0 323.2 L446.0 325.1" stroke="#f0141c" stroke-width="0.35" fill="none"/><path d="M436.2 327.5 L439.2 329.4" stroke="#f0141c" stroke-width="0.35" fill="none"/><path d="M428.2 322.2 L431.2 324.1" stroke="#f0141c" stroke-width="0.35" fill="none"/><path d="M427.0 312.8 L430.0 314.7" stroke="#f0141c" stroke-width="0.35" fill="none"/><path d="M433.8 308.5 L436.8 310.4" stroke="#f0141c" stroke-width="0.35" fill="none"/><ellipse cx="435.0" cy="318.0" rx="4.4" ry="5.5" transform="rotate(-32 435.0 318.0)" fill="none" stroke="#f0141c" stroke-width="0.6" opacity="1"/><ellipse cx="438.0" cy="319.9" rx="4.4" ry="5.5" transform="rotate(-32 438.0 319.9)" fill="none" stroke="#f0141c" stroke-width="0.6" opacity="1"/><ellipse cx="438.0" cy="319.9" rx="6.6" ry="8.2" transform="rotate(-32 438.0 319.9)" fill="none" stroke="#f0141c" stroke-width="0.35" opacity="1"/><path d="M395.9 323.7 L395.4 329.9 L390.5 331.7 L386.1 327.3 L386.6 321.1 L391.5 319.3 Z" fill="none" stroke="#f0141c" stroke-width="0.6"/><path d="M399.0 324.8 L398.5 330.9 L393.6 332.7 L389.2 328.3 L389.8 322.1 L394.6 320.4 Z" fill="none" stroke="#f0141c" stroke-width="0.6"/><path d="M395.9 323.7 L399.0 324.8" stroke="#f0141c" stroke-width="0.35" fill="none"/><path d="M395.4 329.9 L398.5 330.9" stroke="#f0141c" stroke-width="0.35" fill="none"/><path d="M390.5 331.7 L393.6 332.7" stroke="#f0141c" stroke-width="0.35" fill="none"/><path d="M386.1 327.3 L389.2 328.3" stroke="#f0141c" stroke-width="0.35" fill="none"/><path d="M386.6 321.1 L389.8 322.1" stroke="#f0141c" stroke-width="0.35" fill="none"/><path d="M391.5 319.3 L394.6 320.4" stroke="#f0141c" stroke-width="0.35" fill="none"/><ellipse cx="391.0" cy="325.5" rx="2.9" ry="3.6" transform="rotate(-20 391.0 325.5)" fill="none" stroke="#f0141c" stroke-width="0.6" opacity="1"/><ellipse cx="394.1" cy="326.5" rx="2.9" ry="3.6" transform="rotate(-20 394.1 326.5)" fill="none" stroke="#f0141c" stroke-width="0.6" opacity="1"/><ellipse cx="394.1" cy="326.5" rx="4.3" ry="5.3" transform="rotate(-20 394.1 326.5)" fill="none" stroke="#f0141c" stroke-width="0.35" opacity="1"/><ellipse cx="379.0" cy="330.0" rx="3.2" ry="4.2" transform="rotate(-18.43494882292201 379.0 330.0)" fill="none" stroke="#f0141c" stroke-width="0.6" opacity="1"/><ellipse cx="388.0" cy="327.0" rx="3.2" ry="4.2" transform="rotate(-18.43494882292201 388.0 327.0)" fill="none" stroke="#f0141c" stroke-width="0.6" opacity="1"/><path d="M380.3 334.0 L389.3 331.0" stroke="#f0141c" stroke-width="0.6" fill="none"/><path d="M377.7 326.0 L386.7 323.0" stroke="#f0141c" stroke-width="0.6" fill="none"/><path d="M373.1 342.5 L374.4 352.5 L367.3 356.9 L358.9 351.5 L357.6 341.5 L364.7 337.1 Z" fill="none" stroke="#f0141c" stroke-width="0.6"/><path d="M376.6 344.7 L377.8 354.7 L370.7 359.1 L362.3 353.6 L361.1 343.7 L368.2 339.3 Z" fill="none" stroke="#f0141c" stroke-width="0.6"/><path d="M373.1 342.5 L376.6 344.7" stroke="#f0141c" stroke-width="0.35" fill="none"/><path d="M374.4 352.5 L377.8 354.7" stroke="#f0141c" stroke-width="0.35" fill="none"/><path d="M367.3 356.9 L370.7 359.1" stroke="#f0141c" stroke-width="0.35" fill="none"/><path d="M358.9 351.5 L362.3 353.6" stroke="#f0141c" stroke-width="0.35" fill="none"/><path d="M357.6 341.5 L361.1 343.7" stroke="#f0141c" stroke-width="0.35" fill="none"/><path d="M364.7 337.1 L368.2 339.3" stroke="#f0141c" stroke-width="0.35" fill="none"/><ellipse cx="366.0" cy="347.0" rx="4.6" ry="5.8" transform="rotate(-32 366.0 347.0)" fill="none" stroke="#f0141c" stroke-width="0.6" opacity="1"/><ellipse cx="369.5" cy="349.2" rx="4.6" ry="5.8" transform="rotate(-32 369.5 349.2)" fill="none" stroke="#f0141c" stroke-width="0.6" opacity="1"/><ellipse cx="369.5" cy="349.2" rx="6.9" ry="8.6" transform="rotate(-32 369.5 349.2)" fill="none" stroke="#f0141c" stroke-width="0.35" opacity="1"/><path d="M329.0 303.0 L360.0 338.0" stroke="#f0141c" stroke-width="0.55" fill="none"/><path d="M321.0 312.0 L352.0 349.0" stroke="#f0141c" stroke-width="0.55" fill="none"/><ellipse cx="326.0" cy="307.0" rx="4.0" ry="7.0" transform="rotate(-40 326.0 307.0)" fill="none" stroke="#f0141c" stroke-width="0.6" opacity="1"/><ellipse cx="344.0" cy="327.0" rx="4.0" ry="7.0" transform="rotate(-40 344.0 327.0)" fill="none" stroke="#f0141c" stroke-width="0.6" opacity="1"/><ellipse cx="352.5" cy="375.0" rx="7.2" ry="9.0" transform="rotate(47.642545294064725 352.5 375.0)" fill="none" stroke="#f0141c" stroke-width="0.6" opacity="1"/><ellipse cx="368.0" cy="392.0" rx="7.2" ry="9.0" transform="rotate(47.642545294064725 368.0 392.0)" fill="none" stroke="#f0141c" stroke-width="0.6" opacity="1"/><path d="M345.8 381.1 L361.3 398.1" stroke="#f0141c" stroke-width="0.6" fill="none"/><path d="M359.2 368.9 L374.7 385.9" stroke="#f0141c" stroke-width="0.6" fill="none"/><ellipse cx="351.5" cy="372.5" rx="5.5" ry="6.5" transform="rotate(45 351.5 372.5)" fill="none" stroke="#f0141c" stroke-width="0.4" opacity="1"/><ellipse cx="368.0" cy="392.0" rx="4.0" ry="8.2" transform="rotate(48 368.0 392.0)" fill="none" stroke="#f0141c" stroke-width="0.4" opacity="1"/><ellipse cx="368.0" cy="392.0" rx="2.0" ry="7.0" transform="rotate(48 368.0 392.0)" fill="none" stroke="#f0141c" stroke-width="0.4" opacity="1"/><path d="M285.6 372.2 L284.0 379.5 L277.9 380.8 L273.4 374.8 L275.0 367.5 L281.1 366.2 Z" fill="none" stroke="#f0141c" stroke-width="0.6"/><path d="M288.9 371.4 L287.2 378.6 L281.1 379.9 L276.7 374.0 L278.3 366.7 L284.4 365.4 Z" fill="none" stroke="#f0141c" stroke-width="0.6"/><path d="M285.6 372.2 L288.9 371.4" stroke="#f0141c" stroke-width="0.35" fill="none"/><path d="M284.0 379.5 L287.2 378.6" stroke="#f0141c" stroke-width="0.35" fill="none"/><path d="M277.9 380.8 L281.1 379.9" stroke="#f0141c" stroke-width="0.35" fill="none"/><path d="M273.4 374.8 L276.7 374.0" stroke="#f0141c" stroke-width="0.35" fill="none"/><path d="M275.0 367.5 L278.3 366.7" stroke="#f0141c" stroke-width="0.35" fill="none"/><path d="M281.1 366.2 L284.4 365.4" stroke="#f0141c" stroke-width="0.35" fill="none"/><ellipse cx="279.5" cy="373.5" rx="3.4" ry="4.3" transform="rotate(-12 279.5 373.5)" fill="none" stroke="#f0141c" stroke-width="0.6" opacity="1"/><ellipse cx="282.8" cy="372.7" rx="3.4" ry="4.3" transform="rotate(-12 282.8 372.7)" fill="none" stroke="#f0141c" stroke-width="0.6" opacity="1"/><ellipse cx="282.8" cy="372.7" rx="5.1" ry="6.4" transform="rotate(-12 282.8 372.7)" fill="none" stroke="#f0141c" stroke-width="0.35" opacity="1"/><ellipse cx="288.0" cy="371.0" rx="3.6" ry="4.8" transform="rotate(-19.44003482817619 288.0 371.0)" fill="none" stroke="#f0141c" stroke-width="0.6" opacity="1"/><ellipse cx="296.5" cy="368.0" rx="3.6" ry="4.8" transform="rotate(-19.44003482817619 296.5 368.0)" fill="none" stroke="#f0141c" stroke-width="0.6" opacity="1"/><path d="M289.6 375.5 L298.1 372.5" stroke="#f0141c" stroke-width="0.6" fill="none"/><path d="M286.4 366.5 L294.9 363.5" stroke="#f0141c" stroke-width="0.6" fill="none"/><path d="M225.8 229.5 L229.5 225.6 L235.4 227.5 L236.8 237.2 L233 241 L227 239.3 Z" fill="#9a9a9a" fill-opacity="0.75" stroke="#f0141c" stroke-width="0.5"/><path d="M229.5 225.6 L231.0 235.5" stroke="#f0141c" stroke-width="0.55" fill="none"/><path d="M231.0 235.5 L227.0 239.3" stroke="#f0141c" stroke-width="0.55" fill="none"/><path d="M231.0 235.5 L236.8 237.2" stroke="#f0141c" stroke-width="0.55" fill="none"/><ellipse cx="251.0" cy="305.0" rx="12.5" ry="27.0" transform="rotate(-16 251.0 305.0)" fill="none" stroke="#f0141c" stroke-width="0.5" opacity="1"/><ellipse cx="247.0" cy="306.0" rx="7.5" ry="20.0" transform="rotate(-16 247.0 306.0)" fill="none" stroke="#f0141c" stroke-width="0.5" opacity="1"/><ellipse cx="246.0" cy="306.5" rx="10.0" ry="24.0" transform="rotate(-16 246.0 306.5)" fill="none" stroke="#f0141c" stroke-width="0.5" opacity="1"/><ellipse cx="245.0" cy="307.0" rx="5.0" ry="15.0" transform="rotate(-16 245.0 307.0)" fill="none" stroke="#f0141c" stroke-width="0.5" opacity="1"/><ellipse cx="255.5" cy="303.5" rx="11.5" ry="26.0" transform="rotate(-16 255.5 303.5)" fill="none" stroke="#f0141c" stroke-width="0.5" opacity="1"/><ellipse cx="243.5" cy="307.0" rx="11.0" ry="25.0" transform="rotate(-16 243.5 307.0)" fill="none" stroke="#f0141c" stroke-width="0.5" opacity="1"/><ellipse cx="285.0" cy="296.0" rx="16.0" ry="33.5" transform="rotate(-14 285.0 296.0)" fill="none" stroke="#f0141c" stroke-width="0.5" opacity="1"/><ellipse cx="282.0" cy="297.0" rx="9.0" ry="22.0" transform="rotate(-14 282.0 297.0)" fill="none" stroke="#f0141c" stroke-width="0.5" opacity="1"/><ellipse cx="279.0" cy="298.0" rx="13.0" ry="30.0" transform="rotate(-14 279.0 298.0)" fill="none" stroke="#f0141c" stroke-width="0.5" opacity="1"/><ellipse cx="290.0" cy="294.0" rx="15.0" ry="32.0" transform="rotate(-14 290.0 294.0)" fill="none" stroke="#f0141c" stroke-width="0.5" opacity="1"/><ellipse cx="280.0" cy="298.0" rx="6.0" ry="16.0" transform="rotate(-14 280.0 298.0)" fill="none" stroke="#f0141c" stroke-width="0.5" opacity="1"/><ellipse cx="268.0" cy="287.0" rx="2.4" ry="3.5" transform="rotate(-14 268.0 287.0)" fill="none" stroke="#f0141c" stroke-width="0.4" opacity="1"/><ellipse cx="273.0" cy="285.0" rx="3.1" ry="4.5" transform="rotate(-14 273.0 285.0)" fill="none" stroke="#f0141c" stroke-width="0.4" opacity="1"/><ellipse cx="277.0" cy="290.0" rx="2.1" ry="3.0" transform="rotate(-14 277.0 290.0)" fill="none" stroke="#f0141c" stroke-width="0.4" opacity="1"/><ellipse cx="271.0" cy="296.0" rx="3.5" ry="5.0" transform="rotate(-14 271.0 296.0)" fill="none" stroke="#f0141c" stroke-width="0.4" opacity="1"/><ellipse cx="266.0" cy="300.0" rx="2.1" ry="3.0" transform="rotate(-14 266.0 300.0)" fill="none" stroke="#f0141c" stroke-width="0.4" opacity="1"/><path d="M262.0 283.0 L292.0 275.0" stroke="#f0141c" stroke-width="0.55" fill="none"/><path d="M263.0 288.0 L293.0 280.0" stroke="#f0141c" stroke-width="0.55" fill="none"/><path d="M298 174 C308 173 317 181 318.5 192 M300 176.5 C308 176 314.5 183 316 194 M302 172.5 C312 173 319.5 182 320 196 M284 182 C287 178 291 176.5 295 176" fill="none" stroke="#f0141c" stroke-width="0.65"/><path d="M278 231 C284 227 292 227 298 231 M280 234 C286 231 292 231 296 234" fill="none" stroke="#f0141c" stroke-width="0.5"/>
<path d="M261.6 121.0 L264.5 256.0" stroke="#2222ee" stroke-width="0.6" fill="none"/><path d="M266.0 134.0 L268.5 256.0" stroke="#2222ee" stroke-width="0.6" fill="none"/><path d="M284.0 142.0 L285.0 255.0" stroke="#2222ee" stroke-width="0.6" fill="none"/><path d="M292.6 131.0 L293.0 255.0" stroke="#2222ee" stroke-width="0.6" fill="none"/><path d="M341.0 120.0 L336.0 230.0" stroke="#2222ee" stroke-width="0.6" fill="none"/><path d="M348.4 130.0 L342.5 230.0" stroke="#2222ee" stroke-width="0.6" fill="none"/><path d="M364.4 116.0 L359.5 190.0" stroke="#2222ee" stroke-width="0.6" fill="none"/><path d="M369.4 99.0 L361.5 190.0" stroke="#2222ee" stroke-width="0.6" fill="none"/><path d="M344.0 110.6 L266.4 125.8" stroke="#2222ee" stroke-width="1.15" fill="none"/><path d="M262.3 126.6 L266.2 124.5 L266.7 127.1 Z" fill="#2222ee"/><path d="M362.0 106.6 L365.2 105.6" stroke="#2222ee" stroke-width="1.15" fill="none"/><path d="M369.2 104.4 L365.6 106.9 L364.8 104.3 Z" fill="#2222ee"/><text x="353.4" y="110.5" font-family="Liberation Sans" font-style="italic" font-size="5.9" fill="#2222ee" text-anchor="middle" transform="rotate(-12 353.4 108.4)">103.1</text><path d="M317.5 131.0 L336.9 126.4" stroke="#2222ee" stroke-width="0.95" fill="none"/><path d="M341.0 125.4 L337.2 127.7 L336.6 125.1 Z" fill="#2222ee"/><path d="M292.6 136.0 L304.0 133.4" stroke="#2222ee" stroke-width="0.95" fill="none"/><text x="310.8" y="134.3" font-family="Liberation Sans" font-style="italic" font-size="5.9" fill="#2222ee" text-anchor="middle" transform="rotate(-12 310.8 132.2)">47.6</text><path d="M252.0 144.0 L257.5 143.0" stroke="#2222ee" stroke-width="0.95" fill="none"/><path d="M261.6 142.2 L257.7 144.3 L257.2 141.6 Z" fill="#2222ee"/><path d="M266.0 140.6 L275.0 138.7" stroke="#2222ee" stroke-width="0.95" fill="none"/><text x="281" y="139.5" font-family="Liberation Sans" font-style="italic" font-size="5.9" fill="#2222ee" text-anchor="middle" transform="rotate(-12 281 137.4)">4.0</text><path d="M258.0 153.8 L261.7 153.1" stroke="#2222ee" stroke-width="0.95" fill="none"/><path d="M265.8 152.3 L261.9 154.4 L261.4 151.8 Z" fill="#2222ee"/><text x="252" y="156.7" font-family="Liberation Sans" font-style="italic" font-size="5.9" fill="#2222ee" text-anchor="middle" transform="rotate(-12 252 154.6)">16.9</text><path d="M274.0 159.6 L279.7 158.6" stroke="#2222ee" stroke-width="0.95" fill="none"/><path d="M283.8 157.8 L279.9 159.9 L279.4 157.2 Z" fill="#2222ee"/><path d="M292.8 154.4 L300.5 153.0" stroke="#2222ee" stroke-width="0.95" fill="none"/><text x="306.2" y="154.3" font-family="Liberation Sans" font-style="italic" font-size="5.9" fill="#2222ee" text-anchor="middle" transform="rotate(-12 306.2 152.2)">7.9</text><path d="M284.4 147.4 L293.0 145.8" stroke="#2222ee" stroke-width="0.95" fill="none"/><path d="M333.0 146.6 L336.6 145.9" stroke="#2222ee" stroke-width="0.95" fill="none"/><path d="M340.7 145.0 L336.9 147.2 L336.3 144.5 Z" fill="#2222ee"/><text x="327.4" y="149.9" font-family="Liberation Sans" font-style="italic" font-size="5.9" fill="#2222ee" text-anchor="middle" transform="rotate(-12 327.4 147.8)">7.9</text><path d="M341.0 136.4 L344.1 135.8" stroke="#2222ee" stroke-width="0.95" fill="none"/><path d="M348.2 135.0 L344.3 137.1 L343.8 134.5 Z" fill="#2222ee"/><path d="M348.4 143.0 L356.0 141.4" stroke="#2222ee" stroke-width="0.95" fill="none"/><path d="M356.0 123.0 L359.9 122.2" stroke="#2222ee" stroke-width="0.95" fill="none"/><path d="M364.0 121.4 L360.1 123.5 L359.6 120.9 Z" fill="#2222ee"/><path d="M368.6 120.6 L374.5 119.5" stroke="#2222ee" stroke-width="0.95" fill="none"/><text x="379.8" y="120.5" font-family="Liberation Sans" font-style="italic" font-size="5.9" fill="#2222ee" text-anchor="middle" transform="rotate(-12 379.8 118.4)">4.0</text><path d="M364.0 131.0 L370.5 129.8" stroke="#2222ee" stroke-width="0.95" fill="none"/><text x="377.3" y="130.7" font-family="Liberation Sans" font-style="italic" font-size="5.9" fill="#2222ee" text-anchor="middle" transform="rotate(-12 377.3 128.6)">15.9</text><path d="M205.6 270.2 L306.0 237.7" stroke="#111" stroke-width="0.65" fill="none"/><text x="199.3" y="274.8" font-family="Liberation Sans" font-size="5.4" fill="#222" text-anchor="middle" transform="rotate(-16 199.3 272.7)">0.00</text><path d="M131.3 367 V376.6 L138.5 374.2" stroke="#2a4fd8" stroke-width="0.5" fill="none"/><path d="M131.3 376.6 L138.5 374.2" stroke="#22a030" stroke-width="0.6"/><path d="M131.3 376.6 L135.5 380.3" stroke="#c01818" stroke-width="0.6"/><path d="M131.3 362.5 L133.8 368.6 C132.5 369.6 130 369.6 128.8 368.6 Z" fill="#1b2fd0"/><path d="M142.6 372.6 L137.6 371.2 C136.9 372.8 137.4 375.2 138.6 376.2 Z" fill="#1e9a2c"/><path d="M139.2 383.4 L133.6 381.6 C133.8 379.8 135.6 378.2 137.4 378.2 Z" fill="#b81414"/><ellipse cx="135.8" cy="380.3" rx="2.3" ry="1.9" fill="#a01010"/><text x="131.3" y="361" font-family="Liberation Sans" font-size="5" fill="#1b2fd0" text-anchor="middle">Z</text><text x="145" y="373.6" font-family="Liberation Sans" font-size="4" fill="#22a030" text-anchor="middle">Y</text><text x="141.4" y="387.3" font-family="Liberation Sans" font-size="5" fill="#d01818" text-anchor="middle">X</text><ellipse cx="442" cy="106" rx="14" ry="6" fill="#d4d4d4" opacity="0.8"/><ellipse cx="442" cy="105.5" rx="11" ry="4.5" fill="#c8c8c8" opacity="0.7"/><path d="M444.7 80.3 L456.3 86.3 L438.4 92.2 L429.3 84.9 Z" fill="#fbfbfb"/><path d="M429.3 84.9 L438.4 92.2 L438.4 109 L430 102 Z" fill="#f1f1f1"/><path d="M438.4 92.2 L456.3 86.3 L454.9 102 L438.4 109 Z" fill="#f7f7f7"/><path d="M444.7 80.3 L456.3 86.3 L454.9 102 L438.4 109 L430 102 L429.3 84.9 Z M429.3 84.9 L438.4 92.2 L456.3 86.3 M438.4 92.2 V109" fill="none" stroke="#b4b4b4" stroke-width="0.45" stroke-dasharray="1.6 0.9"/><text x="447" y="98.4" font-family="Liberation Sans" font-size="3.4" fill="#b0b0b0" text-anchor="middle" transform="rotate(-18 447 97) skewX(-8)">RIGHT</text><text x="442" y="87.4" font-family="Liberation Sans" font-size="2.8" fill="#aaa" text-anchor="middle" transform="rotate(70 442 86.4)">TOP</text><text x="434" y="97" font-family="Liberation Sans" font-size="2.6" fill="#bbb" text-anchor="middle" transform="rotate(38 434 96)">FRONT</text><rect x="452.7" y="116.7" width="12.9" height="100.4" rx="2" fill="#f3f3f3" stroke="#bdbdbd" stroke-width="0.5"/><circle cx="463.2" cy="119.4" r="0.9" fill="none" stroke="#aaaaaa" stroke-width="0.35"/><circle cx="463.2" cy="214.4" r="0.9" fill="none" stroke="#aaaaaa" stroke-width="0.35"/><circle cx="459.2" cy="129" r="4.1" fill="none" stroke="#aaaaaa" stroke-width="0.6"/><circle cx="459.2" cy="129" r="2.2" fill="none" stroke="#aaaaaa" stroke-width="0.6"/><path d="M453.6 139.3 H464.8 M453.6 168.4 H464.8 M453.6 184 H464.8" stroke="#d2d2d2" stroke-width="0.4"/><rect x="458.7" y="136.8" width="1" height="0.5" fill="#aaaaaa"/><rect x="458.7" y="153.3" width="1" height="0.5" fill="#aaaaaa"/><rect x="458.7" y="167" width="1" height="0.5" fill="#aaaaaa"/><rect x="458.7" y="182" width="1" height="0.5" fill="#aaaaaa"/><rect x="458.7" y="197.6" width="1" height="0.5" fill="#aaaaaa"/><rect x="458.7" y="205.6" width="1" height="0.5" fill="#aaaaaa"/><path d="M456 149 C455 146 455.6 144.6 456.8 145.6 L457.6 147 V143.2 C458 142.4 458.8 142.4 459 143.2 V142.6 C459.4 141.8 460.2 141.8 460.5 142.6 V143.3 C460.9 142.6 461.6 142.7 461.8 143.4 V144.4 C462.3 143.9 463 144.1 463 144.9 V148.6 C463 150.6 461.8 151.4 460 151.4 C458 151.4 456.8 150.8 456 149 Z" fill="#fafafa" stroke="#aaaaaa" stroke-width="0.5"/><circle cx="460.6" cy="161.6" r="2.2" fill="#f3f3f3" stroke="#aaaaaa" stroke-width="0.6"/><path d="M462.2 163.2 L464 165" stroke="#aaaaaa" stroke-width="0.7"/><path d="M455 160 H458.6 M456.8 156.6 V160" stroke="#555" stroke-width="0.6"/><path d="M455.8 157.8 L456.8 156.4 L457.8 157.8" fill="none" stroke="#555" stroke-width="0.5"/><path d="M459.2 171.6 L463 175.6 L459.2 179.6 L455.4 175.6 Z" fill="none" stroke="#aaaaaa" stroke-width="0.6"/><ellipse cx="459.2" cy="175.6" rx="1.3" ry="2.6" fill="none" stroke="#aaaaaa" stroke-width="0.5"/><path d="M459.2 170.4 V172 M459.2 179.2 V180.8" stroke="#aaaaaa" stroke-width="0.5"/><rect x="455" y="188.2" width="8.4" height="6.2" rx="0.6" fill="#e9e9e9" stroke="#aaaaaa" stroke-width="0.6"/><rect x="456.4" y="190.8" width="5.6" height="2" fill="#fdfdfd" stroke="#aaaaaa" stroke-width="0.3"/><path d="M456.4 186.8 V188.2 M462 186.8 V188.2" stroke="#aaaaaa" stroke-width="0.6"/><circle cx="458.6" cy="200.6" r="1.7" fill="#cfe6fb" stroke="#6aa5dd" stroke-width="0.5"/><path d="M459.6 202 C461 202 461.6 203 461 204.2" fill="none" stroke="#6aa5dd" stroke-width="0.5"/>
</g>
</svg>
<div class="a" style="left:106.5px;top:402.4px;width:359.5px;height:6.6px;background:#4d4d4d;"></div>
<div class="a" style="left:180.5px;top:402.4px;width:51.5px;height:6.6px;background:#f3f3f3;"></div>
<div class="t" style="left:155.50px;top:403.27px;font-size:4.7px;color:#ddd;transform:scaleX(0.970);">My Home</div>
<div class="t" style="left:183.00px;top:403.27px;font-size:4.7px;color:#333;transform:scaleX(0.834);">GEAR REDUCER.iam</div>
<svg style="left:224px;top:403px" width="6" height="6" viewBox="224 403 6 6"><path d="M225.6 404.4 L228.2 407.2 M228.2 404.4 L225.6 407.2" stroke="#111" stroke-width="0.8"/></svg>
<svg style="left:106px;top:402.5px" width="48" height="6" viewBox="0 0 48 6"><g fill="none" stroke="#ccc" stroke-width="0.5"><rect x="3" y="1" width="2.6" height="3"/><rect x="4.5" y="2.2" width="2.6" height="3"/><rect x="12" y="1" width="1.8" height="1.8"/><rect x="14.6" y="1" width="1.8" height="1.8"/><rect x="12" y="3.5" width="1.8" height="1.8"/><rect x="14.6" y="3.5" width="1.8" height="1.8"/><rect x="21" y="1" width="4" height="1.8"/><rect x="21" y="3.5" width="4" height="1.8"/><rect x="29.5" y="1" width="1.8" height="4.5"/><rect x="32" y="1" width="1.8" height="4.5"/></g><path d="M39.3 4.2 L40.8 1.8 L42.3 4.2 Z" fill="#eee"/><path d="M45 0 V6" stroke="#666" stroke-width="0.4"/></svg>
<div class="a" style="left:466px;top:61px;width:2px;height:348px;background:#333;"></div>
<div class="a" style="left:468px;top:61px;width:265px;height:348px;background:#f0f0f0;"></div>
<div class="a" style="left:468px;top:61px;width:265px;height:9px;background:#4a4a4a;"></div>
<div class="a" style="left:468px;top:61px;width:45px;height:9px;background:#fafafa;"></div>
<div class="t" style="left:469.60px;top:63.36px;font-size:4.9px;color:#222;transform:scaleX(0.818);">Tolerance Analysis</div>
<svg style="left:505px;top:62px" width="7" height="8" viewBox="505 62 7 8"><path d="M506.6 63.8 L510 67.6 M510 63.8 L506.6 67.6" stroke="#333" stroke-width="0.6"/></svg>
<div class="t" style="left:514.80px;top:62.12px;font-size:6px;color:#fff;transform:scaleX(1.000);font-weight:bold;">+</div>
<svg style="left:724px;top:62px" width="8" height="8" viewBox="0 0 8 8"><path d="M2 2 H6 M2 3.7 H6 M2 5.4 H6" stroke="#999" stroke-width="0.7"/></svg>
<svg style="left:440px;top:62px" width="26" height="8" viewBox="440 62 26 8"><rect x="445.9" y="65.5" width="4" height="1.3" rx="0.6" fill="#555"/><rect x="454.6" y="63.8" width="3.2" height="2.8" fill="none" stroke="#555" stroke-width="0.6"/><rect x="453.4" y="65" width="3.2" height="2.8" fill="#ececec" stroke="#555" stroke-width="0.6"/><path d="M461.3 64.2 L464.5 67.8 M464.5 64.2 L461.3 67.8 M461.1 64.2 H464.7 M461.1 67.8 H464.7" stroke="#555" stroke-width="0.6"/></svg>
<div class="a" style="left:468px;top:70px;width:265px;height:16.4px;background:#f0f0f0;"></div>
<div class="a" style="left:468px;top:86.2px;width:265px;height:0.5px;background:#cfcfcf;"></div>
<svg style="left:470px;top:72px" width="10" height="12" viewBox="0 0 10 12"><path d="M6.8 2 L3.2 5.6 L6.8 9.3" fill="none" stroke="#444" stroke-width="0.7"/></svg>
<div class="t" style="left:571.20px;top:75.47px;font-size:4.7px;color:#111;transform:scaleX(1.077);font-weight:bold;">Slow Speed Stack Up Details</div>
<div class="a" style="left:468px;top:86.7px;width:259px;height:203px;background:#fff;"></div>
<div class="a" style="left:479.9px;top:87px;width:0.4px;height:16.5px;background:#ededed;"></div>
<div class="a" style="left:531.2px;top:87px;width:0.4px;height:16.5px;background:#ededed;"></div>
<div class="a" style="left:539.6px;top:87px;width:0.4px;height:16.5px;background:#ededed;"></div>
<div class="a" style="left:555.5px;top:87px;width:0.4px;height:16.5px;background:#ededed;"></div>
<div class="a" style="left:591px;top:87px;width:0.4px;height:16.5px;background:#ededed;"></div>
<div class="a" style="left:597px;top:87px;width:0.4px;height:16.5px;background:#ededed;"></div>
<div class="a" style="left:628.5px;top:87px;width:0.4px;height:16.5px;background:#ededed;"></div>
<div class="a" style="left:679px;top:87px;width:0.4px;height:16.5px;background:#ededed;"></div>
<div class="a" style="left:687.7px;top:87px;width:0.4px;height:16.5px;background:#ededed;"></div>
<div class="a" style="left:693.5px;top:87px;width:0.4px;height:16.5px;background:#ededed;"></div>
<div class="a" style="left:721px;top:87px;width:0.4px;height:16.5px;background:#ededed;"></div>
<div class="t" style="left:481.70px;top:93.42px;font-size:4.8px;color:#1a1a1a;transform:scaleX(0.864);font-weight:bold;">Name</div>
<div class="t" style="left:543.30px;top:93.42px;font-size:4.8px;color:#1a1a1a;transform:scaleX(0.845);font-weight:bold;">Sens</div>
<div class="t" style="left:571.90px;top:93.42px;font-size:4.8px;color:#1a1a1a;transform:scaleX(0.887);font-weight:bold;">Nominal</div>
<div class="t" style="left:598.50px;top:93.42px;font-size:4.8px;color:#1a1a1a;transform:scaleX(0.927);font-weight:bold;">Tolerance</div>
<div class="t" style="left:630.80px;top:93.42px;font-size:4.8px;color:#1a1a1a;transform:scaleX(0.951);font-weight:bold;">Datum</div>
<div class="t" style="left:695.70px;top:93.42px;font-size:4.8px;color:#1a1a1a;transform:scaleX(0.797);font-weight:bold;">Cp</div>
<div class="a" style="left:468px;top:269.8px;width:259px;height:8.0px;background:#fdf1ef;"></div>
<div class="a" style="left:468px;top:278.84999999999997px;width:259px;height:8.9px;background:#cce5fa;"></div>
<div class="a" style="left:468px;top:104.1px;width:259px;height:9.3px;background:#f0f0f0;"></div>
<div class="a" style="left:468px;top:140.70000000000002px;width:259px;height:9.3px;background:#f0f0f0;"></div>
<div class="a" style="left:468px;top:159.0px;width:259px;height:9.3px;background:#f0f0f0;"></div>
<div class="a" style="left:468px;top:195.60000000000002px;width:259px;height:9.3px;background:#f0f0f0;"></div>
<div class="a" style="left:468px;top:232.2px;width:259px;height:9.3px;background:#f0f0f0;"></div>
<div class="a" style="left:468px;top:250.5px;width:259px;height:9.3px;background:#f0f0f0;"></div>
<div class="a" style="left:468px;top:122.5px;width:259px;height:0.5px;background:#c9c9c9;"></div>
<div class="a" style="left:468px;top:177.4px;width:259px;height:0.5px;background:#c9c9c9;"></div>
<div class="a" style="left:468px;top:214.0px;width:259px;height:0.5px;background:#c9c9c9;"></div>
<div class="a" style="left:468px;top:268.90000000000003px;width:259px;height:0.5px;background:#c9c9c9;"></div>
<div class="t" style="left:481.20px;top:106.67px;font-size:4.7px;color:#1a1a1a;transform:scaleX(0.840);">Dimension1</div>
<div class="t" style="left:481.20px;top:115.82px;font-size:4.7px;color:#1a1a1a;transform:scaleX(0.840);">A</div>
<div class="t" style="left:481.20px;top:124.97px;font-size:4.7px;color:#1a1a1a;transform:scaleX(0.840);">RETAINING PLATE:2 (mm)</div>
<div class="t" style="left:481.20px;top:134.12px;font-size:4.7px;color:#1a1a1a;transform:scaleX(0.840);">Face22</div>
<div class="t" style="left:481.20px;top:143.27px;font-size:4.7px;color:#1a1a1a;transform:scaleX(0.840);">Dimension3</div>
<div class="t" style="left:481.20px;top:152.42px;font-size:4.7px;color:#1a1a1a;transform:scaleX(0.840);">A</div>
<div class="t" style="left:481.20px;top:161.57px;font-size:4.7px;color:#1a1a1a;transform:scaleX(0.840);">Dimension4</div>
<div class="t" style="left:481.20px;top:170.72px;font-size:4.7px;color:#1a1a1a;transform:scaleX(0.840);">Face24</div>
<div class="t" style="left:481.20px;top:179.87px;font-size:4.7px;color:#1a1a1a;transform:scaleX(0.840);">GEAR HOUSING:1 (mm)</div>
<div class="t" style="left:481.20px;top:189.02px;font-size:4.7px;color:#1a1a1a;transform:scaleX(0.840);">Face25</div>
<div class="t" style="left:481.20px;top:198.17px;font-size:4.7px;color:#1a1a1a;transform:scaleX(0.840);">Dimension5</div>
<div class="t" style="left:481.20px;top:207.32px;font-size:4.7px;color:#1a1a1a;transform:scaleX(0.840);">Face26</div>
<div class="t" style="left:481.20px;top:216.47px;font-size:4.7px;color:#1a1a1a;transform:scaleX(0.840);">RETAINING PLATE:1 (mm)</div>
<div class="t" style="left:481.20px;top:225.62px;font-size:4.7px;color:#1a1a1a;transform:scaleX(0.840);">Face24</div>
<div class="t" style="left:481.20px;top:234.77px;font-size:4.7px;color:#1a1a1a;transform:scaleX(0.840);">Dimension4</div>
<div class="t" style="left:481.20px;top:243.92px;font-size:4.7px;color:#1a1a1a;transform:scaleX(0.840);">A</div>
<div class="t" style="left:481.20px;top:253.07px;font-size:4.7px;color:#1a1a1a;transform:scaleX(0.840);">Dimension3</div>
<div class="t" style="left:481.20px;top:262.22px;font-size:4.7px;color:#1a1a1a;transform:scaleX(0.840);">Face22</div>
<div class="t" style="left:481.20px;top:271.37px;font-size:4.7px;color:#1a1a1a;transform:scaleX(0.840);">Slow Speed Stack Up</div>
<div class="t" style="left:481.20px;top:280.52px;font-size:4.7px;color:#1a1a1a;transform:scaleX(0.840);">Objectives (mm)</div>
<svg style="left:0;top:0" width="750" height="429" viewBox="0 0 750 429"><rect x="556.4" y="104.7" width="32.3" height="8" fill="#efefef" stroke="#444" stroke-width="0.6"/><rect x="590.6" y="104.7" width="37.9" height="8" fill="#efefef" stroke="#444" stroke-width="0.6"/><rect x="628.5" y="104.7" width="49.9" height="8" fill="#efefef" stroke="#444" stroke-width="0.6"/><path d="M596.5 104.7 V112.7" stroke="#333" stroke-width="0.6"/><circle cx="593.4" cy="108.8" r="1.3" fill="none" stroke="#222" stroke-width="0.5"/><path d="M591.4 108.8 H595.4 M593.4 106.6 V111.0" stroke="#222" stroke-width="0.5"/><g fill="none" stroke="#2a2a2a" stroke-width="0.95"><ellipse cx="682.1" cy="107.1" rx="1.9" ry="1.75"/><ellipse cx="685.2" cy="110.7" rx="1.9" ry="1.75"/><path d="M682.9 108.0 L684.4 109.8" stroke-width="1.2"/></g><rect x="556.4" y="141.3" width="32.3" height="8" fill="#efefef" stroke="#444" stroke-width="0.6"/><rect x="590.6" y="141.3" width="37.9" height="8" fill="#efefef" stroke="#444" stroke-width="0.6"/><rect x="628.5" y="141.3" width="49.9" height="8" fill="#efefef" stroke="#444" stroke-width="0.6"/><path d="M596.5 141.3 V149.3" stroke="#333" stroke-width="0.6"/><circle cx="593.4" cy="145.4" r="1.3" fill="none" stroke="#222" stroke-width="0.5"/><path d="M591.4 145.4 H595.4 M593.4 143.20000000000002 V147.6" stroke="#222" stroke-width="0.5"/><g fill="none" stroke="#2a2a2a" stroke-width="0.95"><ellipse cx="682.1" cy="143.70000000000002" rx="1.9" ry="1.75"/><ellipse cx="685.2" cy="147.3" rx="1.9" ry="1.75"/><path d="M682.9 144.6 L684.4 146.4" stroke-width="1.2"/></g><rect x="556.4" y="159.6" width="32.3" height="8" fill="#efefef" stroke="#444" stroke-width="0.6"/><rect x="590.6" y="159.6" width="37.9" height="8" fill="#efefef" stroke="#444" stroke-width="0.6"/><rect x="628.5" y="159.6" width="49.9" height="8" fill="#efefef" stroke="#444" stroke-width="0.6"/><path d="M596.5 159.6 V167.6" stroke="#333" stroke-width="0.6"/><circle cx="593.4" cy="163.7" r="1.3" fill="none" stroke="#222" stroke-width="0.5"/><path d="M591.4 163.7 H595.4 M593.4 161.5 V165.89999999999998" stroke="#222" stroke-width="0.5"/><g fill="none" stroke="#2a2a2a" stroke-width="0.95"><ellipse cx="682.1" cy="162.0" rx="1.9" ry="1.75"/><ellipse cx="685.2" cy="165.6" rx="1.9" ry="1.75"/><path d="M682.9 162.89999999999998 L684.4 164.7" stroke-width="1.2"/></g><path d="M591.3 202.3 H595 M593.15 202.3 V197.9 M592 199.3 L593.15 197.9 L594.3 199.3 M592 200.9 H594.3" stroke="#222" stroke-width="0.6" fill="none"/><g fill="none" stroke="#2a2a2a" stroke-width="0.95"><ellipse cx="682.1" cy="198.60000000000002" rx="1.9" ry="1.75"/><ellipse cx="685.2" cy="202.20000000000002" rx="1.9" ry="1.75"/><path d="M682.9 199.5 L684.4 201.3" stroke-width="1.2"/></g><rect x="556.4" y="232.79999999999998" width="32.3" height="8" fill="#efefef" stroke="#444" stroke-width="0.6"/><rect x="590.6" y="232.79999999999998" width="37.9" height="8" fill="#efefef" stroke="#444" stroke-width="0.6"/><rect x="628.5" y="232.79999999999998" width="49.9" height="8" fill="#efefef" stroke="#444" stroke-width="0.6"/><path d="M596.5 232.79999999999998 V240.79999999999998" stroke="#333" stroke-width="0.6"/><circle cx="593.4" cy="236.89999999999998" r="1.3" fill="none" stroke="#222" stroke-width="0.5"/><path d="M591.4 236.89999999999998 H595.4 M593.4 234.7 V239.09999999999997" stroke="#222" stroke-width="0.5"/><g fill="none" stroke="#2a2a2a" stroke-width="0.95"><ellipse cx="682.1" cy="235.2" rx="1.9" ry="1.75"/><ellipse cx="685.2" cy="238.79999999999998" rx="1.9" ry="1.75"/><path d="M682.9 236.09999999999997 L684.4 237.89999999999998" stroke-width="1.2"/></g><rect x="556.4" y="251.1" width="32.3" height="8" fill="#efefef" stroke="#444" stroke-width="0.6"/><rect x="590.6" y="251.1" width="37.9" height="8" fill="#efefef" stroke="#444" stroke-width="0.6"/><rect x="628.5" y="251.1" width="49.9" height="8" fill="#efefef" stroke="#444" stroke-width="0.6"/><path d="M596.5 251.1 V259.09999999999997" stroke="#333" stroke-width="0.6"/><circle cx="593.4" cy="255.2" r="1.3" fill="none" stroke="#222" stroke-width="0.5"/><path d="M591.4 255.2 H595.4 M593.4 253.0 V257.4" stroke="#222" stroke-width="0.5"/><g fill="none" stroke="#2a2a2a" stroke-width="0.95"><ellipse cx="682.1" cy="253.5" rx="1.9" ry="1.75"/><ellipse cx="685.2" cy="257.09999999999997" rx="1.9" ry="1.75"/><path d="M682.9 254.39999999999998 L684.4 256.2" stroke-width="1.2"/></g><path d="M473.7 104.6 V117.95" stroke="#000" stroke-width="0.9"/><path d="M471.8 115.35 L473.7 118.75 L475.59999999999997 115.35 Z" fill="#000"/><path d="M470.9 119.25 H476.5" stroke="#000" stroke-width="0.7"/><path d="M471.0 136.25 H476.4" stroke="#111" stroke-width="0.5"/><path d="M473.7 136.25 V172.85" stroke="#000" stroke-width="0.9"/><path d="M471.8 151.95000000000002 L473.7 155.35000000000002 L475.59999999999997 151.95000000000002 Z" fill="#000"/><path d="M470.9 155.85000000000002 H476.5" stroke="#000" stroke-width="0.7"/><path d="M471.8 170.25 L473.7 173.65 L475.59999999999997 170.25 Z" fill="#000"/><path d="M470.9 174.15 H476.5" stroke="#000" stroke-width="0.7"/><path d="M471.0 191.15 H476.4" stroke="#111" stroke-width="0.5"/><path d="M473.7 191.15 V209.45" stroke="#000" stroke-width="0.9"/><path d="M471.8 206.85 L473.7 210.25 L475.59999999999997 206.85 Z" fill="#000"/><path d="M470.9 210.75 H476.5" stroke="#000" stroke-width="0.7"/><path d="M471.0 227.75 H476.4" stroke="#111" stroke-width="0.5"/><path d="M473.7 227.75 V264.35" stroke="#000" stroke-width="0.9"/><path d="M471.8 243.45000000000002 L473.7 246.85000000000002 L475.59999999999997 243.45000000000002 Z" fill="#000"/><path d="M470.9 247.35000000000002 H476.5" stroke="#000" stroke-width="0.7"/><path d="M471.8 261.75000000000006 L473.7 265.15000000000003 L475.59999999999997 261.75000000000006 Z" fill="#000"/><path d="M470.9 265.65000000000003 H476.5" stroke="#000" stroke-width="0.7"/><path d="M473.7 270.9 V276.1" stroke="#d22" stroke-width="0.6"/><path d="M472.09999999999997 270.9 H475.3" stroke="#2a2" stroke-width="0.8"/><path d="M472.09999999999997 276.1 H475.3" stroke="#d22" stroke-width="0.8"/></svg>
<div class="t" style="left:545.80px;top:106.62px;font-size:4.8px;color:#222;transform:scaleX(0.860);">+1</div>
<div class="t" style="left:581.86px;top:106.62px;font-size:4.8px;color:#222;transform:scaleX(0.860);">7.9</div>
<div class="t" style="left:597.60px;top:106.62px;font-size:4.8px;color:#222;transform:scaleX(0.860);">0.1</div>
<div class="t" style="left:631.90px;top:106.62px;font-size:4.8px;color:#222;transform:scaleX(0.860);">A</div>
<div class="t" style="left:545.80px;top:143.22px;font-size:4.8px;color:#222;transform:scaleX(0.860);">+1</div>
<div class="t" style="left:579.57px;top:143.22px;font-size:4.8px;color:#222;transform:scaleX(0.860);">15.9</div>
<div class="t" style="left:597.60px;top:143.22px;font-size:4.8px;color:#222;transform:scaleX(0.860);">0.1</div>
<div class="t" style="left:631.90px;top:143.22px;font-size:4.8px;color:#222;transform:scaleX(0.860);">A</div>
<div class="t" style="left:545.80px;top:161.52px;font-size:4.8px;color:#222;transform:scaleX(0.860);">+1</div>
<div class="t" style="left:581.86px;top:161.52px;font-size:4.8px;color:#222;transform:scaleX(0.860);">4.0</div>
<div class="t" style="left:597.60px;top:161.52px;font-size:4.8px;color:#222;transform:scaleX(0.860);">0.1</div>
<div class="t" style="left:631.90px;top:161.52px;font-size:4.8px;color:#222;transform:scaleX(0.860);">A</div>
<div class="t" style="left:545.80px;top:198.12px;font-size:4.8px;color:#222;transform:scaleX(0.860);">-1</div>
<div class="t" style="left:579.07px;top:198.12px;font-size:4.8px;color:#222;transform:scaleX(0.860);">103.1</div>
<div class="t" style="left:597.60px;top:198.12px;font-size:4.8px;color:#222;transform:scaleX(0.860);">0.2</div>
<div class="t" style="left:545.80px;top:234.72px;font-size:4.8px;color:#222;transform:scaleX(0.860);">+1</div>
<div class="t" style="left:581.86px;top:234.72px;font-size:4.8px;color:#222;transform:scaleX(0.860);">4.0</div>
<div class="t" style="left:597.60px;top:234.72px;font-size:4.8px;color:#222;transform:scaleX(0.860);">0.1</div>
<div class="t" style="left:631.90px;top:234.72px;font-size:4.8px;color:#222;transform:scaleX(0.860);">A</div>
<div class="t" style="left:545.80px;top:253.02px;font-size:4.8px;color:#222;transform:scaleX(0.860);">+1</div>
<div class="t" style="left:579.57px;top:253.02px;font-size:4.8px;color:#222;transform:scaleX(0.860);">15.9</div>
<div class="t" style="left:597.60px;top:253.02px;font-size:4.8px;color:#222;transform:scaleX(0.860);">0.1</div>
<div class="t" style="left:631.90px;top:253.02px;font-size:4.8px;color:#222;transform:scaleX(0.860);">A</div>
<div class="t" style="left:579.30px;top:271.32px;font-size:4.8px;color:#222;transform:scaleX(0.893);">(0.00)</div>
<div class="t" style="left:591.70px;top:269.79px;font-size:6.4px;color:#111;transform:scaleX(1.000);font-weight:bold;">≤</div>
<div class="t" style="left:597.20px;top:271.32px;font-size:4.8px;color:#e03a2e;transform:scaleX(0.860);">0.55</div>
<div class="t" style="left:579.30px;top:280.47px;font-size:4.8px;color:#222;transform:scaleX(0.893);">(0.00)</div>
<div class="a" style="left:591.5px;top:279.04999999999995px;width:5px;height:7.6px;background:#9db9d3;"></div>
<div class="t" style="left:591.70px;top:278.94px;font-size:6.4px;color:#111;transform:scaleX(1.000);font-weight:bold;">≤</div>
<div class="t" style="left:597.20px;top:280.47px;font-size:4.8px;color:#333;transform:scaleX(0.860);">0.25</div>
<div class="a" style="left:687.9px;top:279.25px;width:5.8px;height:7.2px;background:#7d8c9b;"></div>
<svg style="left:688px;top:279.65px" width="6" height="6" viewBox="0 0 6 6"><path d="M1 1.6 H4.8 L2.9 4.8 Z" fill="#111"/></svg>
<div class="t" style="left:694.30px;top:280.47px;font-size:4.8px;color:#222;transform:scaleX(0.829);">Worst Case</div>
<div class="a" style="left:726.9px;top:86.7px;width:6.1px;height:203px;background:#e9e9e9;"></div>
<div class="a" style="left:726.9px;top:156px;width:6.1px;height:130.5px;background:#a9a9a9;"></div>
<svg style="left:727px;top:87px" width="6" height="5" viewBox="0 0 6 5"><path d="M1.6 3.4 L3 1.6 L4.4 3.4 Z" fill="#888"/></svg>
<div class="a" style="left:468px;top:289.7px;width:265px;height:7.6px;background:#f0f0f0;"></div>
<div class="a" style="left:468px;top:291.6px;width:259px;height:4.3px;background:#e2e2e2;"></div>
<div class="a" style="left:474px;top:291.6px;width:239px;height:4.3px;background:#b9b9b9;"></div>
<svg style="left:468px;top:291.6px" width="259" height="4.3" viewBox="0 0 259 4.3"><path d="M3.6 1 L2 2.15 L3.6 3.3 Z M253.4 1 L255 2.15 L253.4 3.3 Z" fill="#888"/></svg>
<div class="a" style="left:727.5px;top:290.5px;width:4.5px;height:5px;background:#fafafa;border:0.4px solid #bbb;"></div>
<div class="a" style="left:468px;top:297.3px;width:265px;height:111.7px;background:#f0f0f0;"></div>
<div class="a" style="left:469.7px;top:298.4px;width:260.3px;height:102px;background:#fff;border:0.6px solid #c4c4c4;"></div>
<div class="t" style="left:476.60px;top:325.73px;font-size:4.6px;color:#111;transform:scaleX(0.963);font-weight:bold;">Worst Case Results for Slow Speed Stack Up</div>
<svg style="left:0;top:0" width="750" height="429" viewBox="0 0 750 429"><rect x="511" y="354.2" width="128.4" height="11.2" fill="#1fa331"/><rect x="511" y="354.2" width="128.4" height="1.6" fill="#3cc24c"/><rect x="639.4" y="354.2" width="48.8" height="11.2" fill="#c62828"/><rect x="639.4" y="354.2" width="48.8" height="1.6" fill="#de4a4a"/><path d="M511.3 348 V354.5" stroke="#1fa331" stroke-width="0.7"/><path d="M688 348 V354.5" stroke="#d32f2f" stroke-width="0.7"/><path d="M477 360 H723.4" stroke="#111" stroke-width="0.8"/><path d="M475.3 360 L479 358 V362 Z M725 360 L721.3 358 V362 Z" fill="#111"/><path d="M600 360 V367.7 M639.4 351 V367.7" stroke="#111" stroke-width="0.8"/></svg>
<div class="t" style="left:506.45px;top:341.73px;font-size:4.6px;color:#222;transform:scaleX(0.880);">-0.55 mm</div>
<div class="t" style="left:683.03px;top:341.73px;font-size:4.6px;color:#222;transform:scaleX(0.880);">0.55 mm</div>
<div class="t" style="left:595.13px;top:370.53px;font-size:4.6px;color:#222;transform:scaleX(0.880);">0.00 mm</div>
<div class="t" style="left:634.63px;top:370.53px;font-size:4.6px;color:#222;transform:scaleX(0.880);">0.25 mm</div>
<div class="a" style="left:469.7px;top:400.4px;width:19.5px;height:8.6px;background:#fff;border:0.5px solid #c4c4c4;border-top:none;"></div>
<div class="t" style="left:472.80px;top:403.32px;font-size:4.8px;color:#222;transform:scaleX(0.825);">Results</div>
<div class="t" style="left:495.00px;top:403.12px;font-size:4.8px;color:#222;transform:scaleX(0.884);">Contributions</div>
</div></div>
</body></html>
